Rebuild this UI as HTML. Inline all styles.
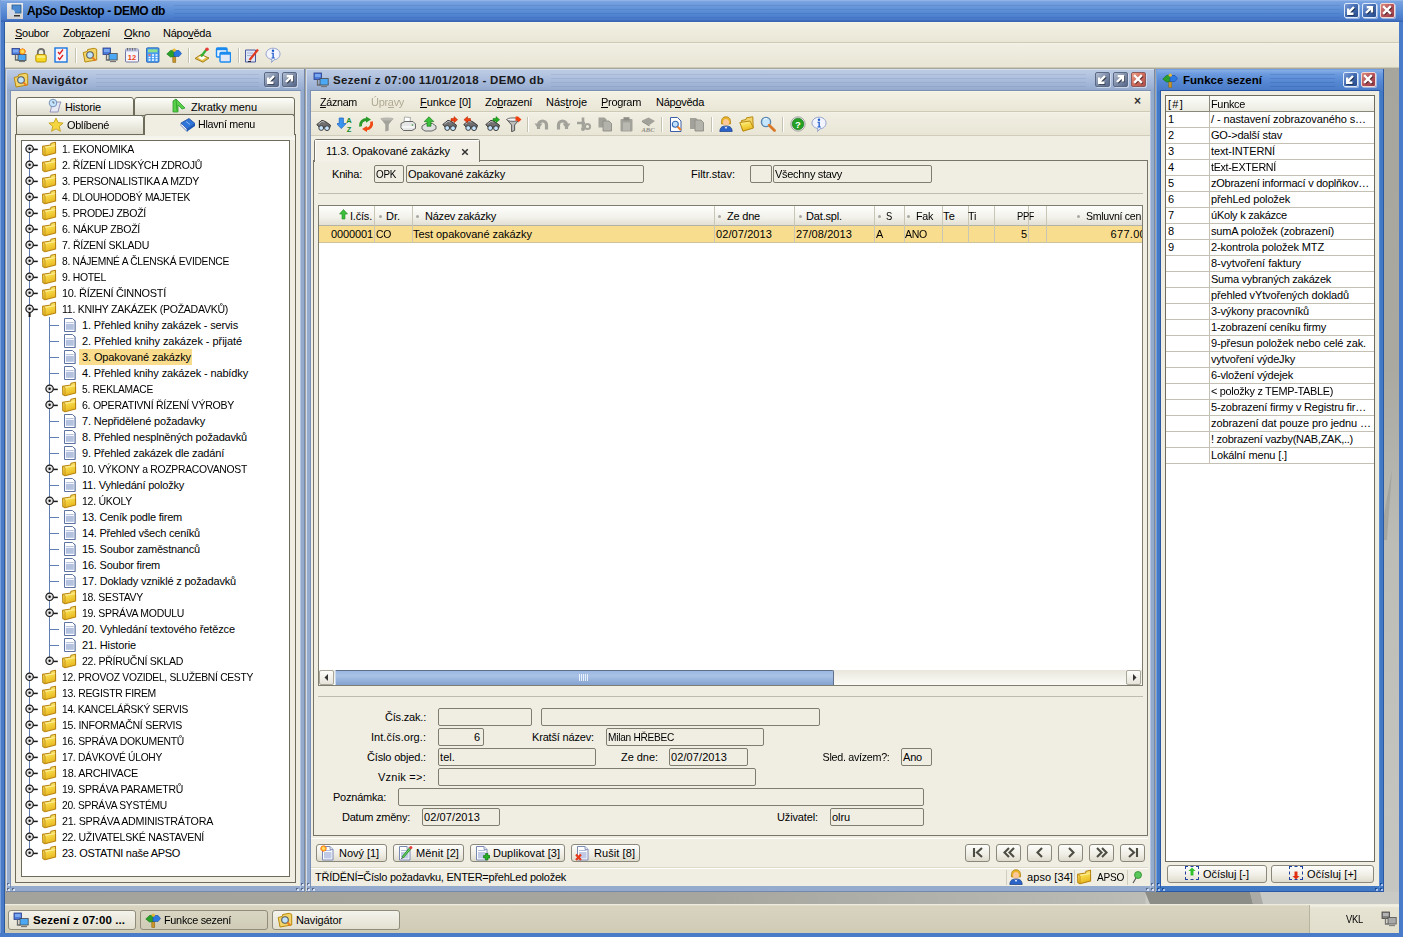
<!DOCTYPE html><html><head><meta charset="utf-8"><style>
html,body{margin:0;padding:0;}
body{width:1403px;height:937px;position:relative;overflow:hidden;background:#4a7bc8;font-family:"Liberation Sans",sans-serif;font-size:11px;color:#000;}
div{position:absolute;box-sizing:border-box;}
.t{white-space:nowrap;}
u{text-decoration:none;border-bottom:1px solid #000;line-height:9px;display:inline-block;}
</style></head><body>
<svg width="0" height="0" style="position:absolute"><defs><linearGradient id="gfold" x1="0" y1="0" x2="0.3" y2="1"><stop offset="0" stop-color="#fff6b8"/><stop offset="0.5" stop-color="#f6d848"/><stop offset="1" stop-color="#e8b820"/></linearGradient></defs></svg>
<div style="left:0px;top:0px;width:1403px;height:22px;background:linear-gradient(#a9c5ee 0px,#7ba4e1 1px,#6a98db 6px,#5387d2 14px,#4776c6 20px,#3866b4 21px);"></div>
<div style="left:174px;top:5px;width:1166px;height:1px;background:rgba(40,80,150,0.16);"></div>
<div style="left:174px;top:9px;width:1166px;height:1px;background:rgba(40,80,150,0.16);"></div>
<div style="left:174px;top:13px;width:1166px;height:1px;background:rgba(40,80,150,0.16);"></div>
<div style="left:174px;top:17px;width:1166px;height:1px;background:rgba(40,80,150,0.16);"></div>
<div style="left:7px;top:3px;width:16px;height:16px;background:linear-gradient(#eee,#cfcfcf);"></div>
<svg style="position:absolute;left:8px;top:4px" width="14" height="14" viewBox="0 0 14 14"><rect x="4" y="1" width="9" height="8" fill="#4a8ad0" stroke="#2a5a90" stroke-width="0.8"/><ellipse cx="4" cy="9" rx="3" ry="3.5" fill="#cfd8e4"/><rect x="6" y="11" width="6" height="1.5" fill="#333"/></svg>
<div class="t" style="font-size:12px;line-height:16px;top:2.53px;letter-spacing:-0.394px;font-weight:bold;left:27px;">ApSo Desktop - DEMO db</div>
<div style="left:1344px;top:3px;width:15px;height:15px;background:linear-gradient(135deg,#7a9cd8,#3f68ae 50%,#284c8c);border:1px solid #dde8f8;border-radius:2px;box-shadow:1px 1px 0 rgba(255,255,255,0.45);"></div>
<svg style="position:absolute;left:1346px;top:5px" width="11" height="11" viewBox="0 0 11 11"><g transform="translate(0.8,0.8)" opacity="0.55"><path d="M8 2L3 7M2.2 3.5v5.3h5.3" stroke="#000" stroke-width="2.4" fill="none"/></g><path d="M8 2L3 7M2.2 3.5v5.3h5.3" stroke="#fff" stroke-width="2.4" fill="none"/></svg>
<div style="left:1362px;top:3px;width:15px;height:15px;background:linear-gradient(135deg,#7a9cd8,#3f68ae 50%,#284c8c);border:1px solid #dde8f8;border-radius:2px;box-shadow:1px 1px 0 rgba(255,255,255,0.45);"></div>
<svg style="position:absolute;left:1364px;top:5px" width="11" height="11" viewBox="0 0 11 11"><g transform="translate(0.8,0.8)" opacity="0.55"><path d="M2 8L7 3M2.7 2.2h5.3v5.3" stroke="#000" stroke-width="2.4" fill="none"/></g><path d="M2 8L7 3M2.7 2.2h5.3v5.3" stroke="#fff" stroke-width="2.4" fill="none"/></svg>
<div style="left:1380px;top:3px;width:15px;height:15px;background:linear-gradient(135deg,#d8887a,#b8525a 50%,#963a48);border:1px solid #f4d8d0;border-radius:2px;box-shadow:1px 1px 0 rgba(255,255,255,0.45);"></div>
<svg style="position:absolute;left:1382px;top:5px" width="11" height="11" viewBox="0 0 11 11"><g transform="translate(0.8,0.8)" opacity="0.55"><path d="M2 2L8 8M8 2L2 8" stroke="#000" stroke-width="2.4" stroke-linecap="square"/></g><path d="M2 2L8 8M8 2L2 8" stroke="#fff" stroke-width="2.4" stroke-linecap="square"/></svg>
<div style="left:5px;top:22px;width:1394px;height:21px;background:linear-gradient(#fdfaea 0px,#f3f1e4 1px,#e9e6d6 20px);"></div>
<div style="left:5px;top:42px;width:1394px;height:1px;background:#cdcab6;"></div>
<div class="t" style="font-size:11px;line-height:16px;top:25.36px;letter-spacing:-0.245px;left:15px;"><u>S</u>oubor</div>
<div class="t" style="font-size:11px;line-height:16px;top:25.36px;letter-spacing:-0.280px;left:63px;">Zob<u>r</u>azení</div>
<div class="t" style="font-size:11px;line-height:16px;top:25.36px;letter-spacing:-0.072px;left:124px;"><u>O</u>kno</div>
<div class="t" style="font-size:11px;line-height:16px;top:25.36px;letter-spacing:-0.268px;left:163px;">Nápo<u>v</u>ěda</div>
<div style="left:5px;top:43px;width:1394px;height:25px;background:linear-gradient(#f8f6ea 0px,#f1efe3 1px,#e8e5d5 24px);"></div>
<div style="left:5px;top:67px;width:1394px;height:1px;background:#cdcab6;"></div>
<svg style="position:absolute;left:11px;top:47px" width="16" height="16" viewBox="0 0 16 16"><rect x="1" y="1.5" width="7.5" height="6" fill="#4a78d8" stroke="#2a3c8a" stroke-width="0.8"/><rect x="2" y="2.5" width="5.5" height="3" fill="#7aa8f0"/><path d="M4.5 7.5v5.5h3" stroke="#6a6a6a" fill="none" stroke-width="1.3"/><rect x="7" y="7.5" width="8" height="6" fill="#4aa8f4" stroke="#4a4a4a" stroke-width="0.8"/><path d="M8 14.5h6" stroke="#777" stroke-width="1.2"/><circle cx="11.5" cy="4.5" r="2.8" fill="#ffc020" stroke="#f05010" stroke-width="1" stroke-dasharray="1.2 0.8"/><circle cx="11.5" cy="4.5" r="1.5" fill="#ffe060"/></svg>
<svg style="position:absolute;left:33px;top:47px" width="16" height="16" viewBox="0 0 16 16"><path d="M4.8 8V5.2a3.2 3.2 0 0 1 6.4 0V8" stroke="#6e6e6e" stroke-width="1.8" fill="none"/><rect x="2.8" y="7.5" width="10.4" height="7.5" rx="1.5" fill="#f6d820" stroke="#b08a00" stroke-width="0.9"/><rect x="3.8" y="8.5" width="8.4" height="2.5" fill="#fff6a0" opacity="0.7"/></svg>
<svg style="position:absolute;left:53px;top:47px" width="16" height="16" viewBox="0 0 16 16"><rect x="2" y="1" width="12" height="14" fill="#f4f4f8" stroke="#1a74e0" stroke-width="1.4"/><path d="M5 5l1.6 2 3.4-4.5M5 10.5l1.6 2 3.4-4.5" stroke="#e02020" stroke-width="1.3" fill="none"/></svg>
<svg style="position:absolute;left:82px;top:47px" width="16" height="16" viewBox="0 0 16 16"><path d="M1.2 5.5l4-1 0.5-2 6.5-1.2 2.5 1V13L3 15z" fill="#f2d468" stroke="#b88a10" stroke-width="1"/><circle cx="8" cy="8" r="3.3" fill="#bfe3ff" stroke="#555" stroke-width="1.1"/><path d="M10.3 10.3l3.2 3.2" stroke="#f07a20" stroke-width="1.8"/></svg>
<svg style="position:absolute;left:102px;top:47px" width="16" height="16" viewBox="0 0 16 16"><rect x="1" y="1" width="7.5" height="6.5" fill="#4a78d8" stroke="#2a3c8a" stroke-width="0.8"/><rect x="2" y="2" width="5.5" height="3" fill="#7aa8f0"/><path d="M4.5 7.5v5.5h3" stroke="#6a6a6a" fill="none" stroke-width="1.3"/><rect x="7" y="6.5" width="8.2" height="6.5" fill="#4aa8f4" stroke="#4a4a4a" stroke-width="0.8"/><path d="M8 14.5h6" stroke="#777" stroke-width="1.3"/></svg>
<svg style="position:absolute;left:124px;top:47px" width="16" height="16" viewBox="0 0 16 16"><rect x="1.5" y="2" width="13" height="13" rx="1" fill="#f4f4fc" stroke="#7078a8" stroke-width="1"/><rect x="1.5" y="2" width="13" height="2.5" fill="#b8bede"/><path d="M3.5 1v2.5M6 1v2.5M8.5 1v2.5M11 1v2.5" stroke="#555" stroke-width="0.8"/><text x="8" y="12.8" font-size="7.5" font-family="Liberation Sans" font-weight="bold" text-anchor="middle" fill="#f04010">12</text></svg>
<svg style="position:absolute;left:145px;top:47px" width="16" height="16" viewBox="0 0 16 16"><rect x="1.5" y="0.8" width="12.5" height="14.5" rx="1" fill="#4a9cf0" stroke="#1a5ab0" stroke-width="0.8"/><rect x="3" y="2.3" width="9.5" height="3" fill="#8ee08a"/><path d="M3.5 8h2M7 8h2M10.5 8h2M3.5 10.5h2M7 10.5h2M10.5 10.5h2M3.5 13h2M7 13h2M10.5 13h2" stroke="#fff" stroke-width="1.3"/><path d="M3.5 8h2" stroke="#e03030" stroke-width="1.3"/></svg>
<svg style="position:absolute;left:166px;top:47px" width="16" height="16" viewBox="0 0 16 16"><rect x="6.8" y="6" width="3" height="9.5" fill="#c8962a" stroke="#8a6010" stroke-width="0.5"/><path d="M0.8 7L4.5 3.5 8.5 3v6.5L4.5 10z" fill="#2aa02a" stroke="#107010" stroke-width="0.6"/><path d="M8 3.5h5l2.5 3-2.5 3H8z" fill="#2a78e0" stroke="#1a4ca0" stroke-width="0.6"/><circle cx="8.3" cy="3.2" r="1.6" fill="#e8b830"/></svg>
<svg style="position:absolute;left:194px;top:47px" width="16" height="16" viewBox="0 0 16 16"><path d="M1 11.5L7 7.5l8 3.5-6 4.2z" fill="#e8c050" stroke="#a07a10" stroke-width="0.9"/><path d="M4 10.5l4-2 4 2-4 2.5z" fill="#fff"/><path d="M7 9.5L12.5 2.5" stroke="#30b030" stroke-width="2.2"/><circle cx="13" cy="2.2" r="1.8" fill="#e83a3a"/></svg>
<svg style="position:absolute;left:215px;top:47px" width="16" height="16" viewBox="0 0 16 16"><rect x="1.5" y="1" width="10.5" height="9" rx="1" fill="#e8f2ff" stroke="#1a8af0" stroke-width="1.4"/><rect x="1.5" y="1" width="10.5" height="2.2" fill="#1a8af0"/><rect x="5" y="5.5" width="10.5" height="9.5" rx="1" fill="#e0e8f8" stroke="#1a8af0" stroke-width="1.4"/><rect x="5" y="5.5" width="10.5" height="2.2" fill="#1a8af0"/></svg>
<svg style="position:absolute;left:244px;top:47px" width="16" height="16" viewBox="0 0 16 16"><path d="M1.5 3h10v12h-10z" fill="#dfe6f4" stroke="#4a5aa0" stroke-width="1"/><path d="M3 6h6M3 8.5h6" stroke="#9aa8d0" stroke-width="0.8"/><path d="M5.5 13L14 2.5" stroke="#e03a20" stroke-width="2.2"/><path d="M4 14.5h3" stroke="#223" stroke-width="1"/></svg>
<svg style="position:absolute;left:265px;top:47px" width="16" height="16" viewBox="0 0 16 16"><path d="M8 1.2c4 0 7 2.5 7 5.8s-3 5.8-6 5.8l-2.5 2.7 0.5-2.9C4 12 1 10 1 7s3-5.8 7-5.8z" fill="#f2f5ff" stroke="#8a9ac8" stroke-width="0.9"/><circle cx="8" cy="3.8" r="1.2" fill="#1a58c8"/><path d="M6.5 5.8h2.3v4.6h1v1H6.5v-1h1V6.8h-1z" fill="#1a58c8"/></svg>
<div style="left:75px;top:48px;width:1px;height:15px;background:#c5c2b2;"></div>
<div style="left:76px;top:48px;width:1px;height:15px;background:#fff;"></div>
<div style="left:188px;top:48px;width:1px;height:15px;background:#c5c2b2;"></div>
<div style="left:189px;top:48px;width:1px;height:15px;background:#fff;"></div>
<div style="left:238px;top:48px;width:1px;height:15px;background:#c5c2b2;"></div>
<div style="left:239px;top:48px;width:1px;height:15px;background:#fff;"></div>
<div style="left:5px;top:68px;width:1394px;height:836px;background:#a6a59e;"></div>
<div style="left:0px;top:0px;width:1px;height:937px;background:#7aa0dc;"></div>
<div style="left:1384px;top:68px;width:15px;height:836px;background:linear-gradient(#a6a59e 0px,#a9a9a2 300px,#bdbdb8 480px,#c6c6c2 836px);"></div>
<svg style="position:absolute;left:1384px;top:470px" width="15" height="70" viewBox="0 0 15 70"><path d="M8 0L3 70H0V45z" fill="#9a9a94" opacity="0.6"/></svg>
<div style="left:5px;top:892px;width:1394px;height:12px;background:linear-gradient(90deg,#a3a39c 0px,#a6a69f 700px,#bcbcb7 1140px,#c9c9c5 1141px);"></div>
<svg style="position:absolute;left:1100px;top:892px" width="200" height="12" viewBox="0 0 200 12"><path d="M45 0H150L153 12H50z" fill="#8d8d87"/><path d="M150 0H160L163 12H153z" fill="#abaaa4"/></svg>
<div style="left:4px;top:22px;width:1px;height:915px;background:#2a5aa0;"></div>
<div style="left:5px;top:904px;width:1394px;height:29px;background:linear-gradient(#f4f2e8 0px,#d8d4c0 2px,#cfcbb5 28px);"></div>
<div style="left:1309px;top:905px;width:90px;height:28px;background:linear-gradient(#f4f2e8 0px,#e6e3d3 3px,#e1decc 28px);border-left:1px solid #b8b49e;"></div>
<div class="t" style="font-size:11px;line-height:16px;top:911.36px;transform:scaleX(0.8546);transform-origin:left center;letter-spacing:-0.300px;left:1346px;">VKL</div>
<div style="left:1381px;top:911px;width:16px;height:16px;filter:grayscale(1) brightness(1.1);">
<svg style="position:absolute;left:0px;top:0px" width="16" height="16" viewBox="0 0 16 16"><rect x="1" y="1" width="7.5" height="6.5" fill="#4a78d8" stroke="#2a3c8a" stroke-width="0.8"/><rect x="2" y="2" width="5.5" height="3" fill="#7aa8f0"/><path d="M4.5 7.5v5.5h3" stroke="#6a6a6a" fill="none" stroke-width="1.3"/><rect x="7" y="6.5" width="8.2" height="6.5" fill="#4aa8f4" stroke="#4a4a4a" stroke-width="0.8"/><path d="M8 14.5h6" stroke="#777" stroke-width="1.3"/></svg>
</div>
<div style="left:8px;top:910px;width:128px;height:20px;background:linear-gradient(#f4f3ec,#e3e0d0);border:1px solid #8f8c7c;border-radius:3px;"></div>
<svg style="position:absolute;left:13px;top:912px" width="16" height="16" viewBox="0 0 16 16"><rect x="1" y="1" width="7.5" height="6.5" fill="#4a78d8" stroke="#2a3c8a" stroke-width="0.8"/><rect x="2" y="2" width="5.5" height="3" fill="#7aa8f0"/><path d="M4.5 7.5v5.5h3" stroke="#6a6a6a" fill="none" stroke-width="1.3"/><rect x="7" y="6.5" width="8.2" height="6.5" fill="#4aa8f4" stroke="#4a4a4a" stroke-width="0.8"/><path d="M8 14.5h6" stroke="#777" stroke-width="1.3"/></svg>
<div class="t" style="font-size:11.5px;line-height:16px;top:912.20px;letter-spacing:0.069px;font-weight:bold;left:33px;">Sezení z 07:00 ...</div>
<div style="left:140px;top:910px;width:128px;height:20px;background:linear-gradient(#d9d6c3,#cfcbb6);border:1px solid #8f8c7c;border-radius:3px;"></div>
<svg style="position:absolute;left:145px;top:912px" width="16" height="16" viewBox="0 0 16 16"><rect x="6.8" y="6" width="3" height="9.5" fill="#c8962a" stroke="#8a6010" stroke-width="0.5"/><path d="M0.8 7L4.5 3.5 8.5 3v6.5L4.5 10z" fill="#2aa02a" stroke="#107010" stroke-width="0.6"/><path d="M8 3.5h5l2.5 3-2.5 3H8z" fill="#2a78e0" stroke="#1a4ca0" stroke-width="0.6"/><circle cx="8.3" cy="3.2" r="1.6" fill="#e8b830"/></svg>
<div class="t" style="font-size:11px;line-height:16px;top:912.36px;transform:scaleX(0.9906);transform-origin:left center;letter-spacing:-0.300px;left:164px;">Funkce sezení</div>
<div style="left:272px;top:910px;width:128px;height:20px;background:linear-gradient(#f4f3ec,#e3e0d0);border:1px solid #8f8c7c;border-radius:3px;"></div>
<svg style="position:absolute;left:277px;top:912px" width="16" height="16" viewBox="0 0 16 16"><path d="M1.2 5.5l4-1 0.5-2 6.5-1.2 2.5 1V13L3 15z" fill="#f2d468" stroke="#b88a10" stroke-width="1"/><circle cx="8" cy="8" r="3.3" fill="#bfe3ff" stroke="#555" stroke-width="1.1"/><path d="M10.3 10.3l3.2 3.2" stroke="#f07a20" stroke-width="1.8"/></svg>
<div class="t" style="font-size:11px;line-height:16px;top:912.36px;letter-spacing:-0.119px;left:296px;">Navigátor</div>
<div style="left:0px;top:933px;width:1403px;height:4px;background:#4a7bc8;"></div>
<div style="left:6px;top:69px;width:299px;height:823px;background:#95abce;"></div>
<div style="left:6px;top:70px;width:299px;height:21px;background:linear-gradient(#bccbe4 0px,#b6c6e1 4px,#a6b9da 12px,#95abce 20px);"></div>
<div style="left:6px;top:69px;width:299px;height:1px;background:#d2ddf0;"></div>
<div style="left:6px;top:69px;width:1px;height:823px;background:#d2ddf0;"></div>
<div style="left:304px;top:69px;width:1px;height:823px;background:#7388aa;"></div>
<div style="left:6px;top:891px;width:299px;height:1px;background:#7388aa;"></div>
<div style="left:10px;top:90px;width:291px;height:1px;background:#7a90b5;"></div>
<div style="left:10px;top:90px;width:1px;height:798px;background:#7a90b5;"></div>
<div style="left:300px;top:91px;width:1px;height:797px;background:#d2ddf0;opacity:0.5;"></div>
<div style="left:301px;top:888px;width:2px;height:2px;background:#5a6a8a;"></div>
<div style="left:302px;top:889px;width:2px;height:2px;background:#d8e2f2;"></div>
<div style="left:296px;top:888px;width:2px;height:2px;background:#5a6a8a;"></div>
<div style="left:297px;top:889px;width:2px;height:2px;background:#d8e2f2;"></div>
<div style="left:301px;top:883px;width:2px;height:2px;background:#5a6a8a;"></div>
<div style="left:302px;top:884px;width:2px;height:2px;background:#d8e2f2;"></div>
<div style="left:7px;top:888px;width:2px;height:2px;background:#5a6a8a;"></div>
<div style="left:8px;top:889px;width:2px;height:2px;background:#d8e2f2;"></div>
<div style="left:12px;top:888px;width:2px;height:2px;background:#5a6a8a;"></div>
<div style="left:13px;top:889px;width:2px;height:2px;background:#d8e2f2;"></div>
<div style="left:7px;top:883px;width:2px;height:2px;background:#5a6a8a;"></div>
<div style="left:8px;top:884px;width:2px;height:2px;background:#d8e2f2;"></div>
<div style="left:96px;top:74px;width:163px;height:1px;background:rgba(80,100,150,0.13);"></div>
<div style="left:96px;top:78px;width:163px;height:1px;background:rgba(80,100,150,0.13);"></div>
<div style="left:96px;top:82px;width:163px;height:1px;background:rgba(80,100,150,0.13);"></div>
<div style="left:96px;top:86px;width:163px;height:1px;background:rgba(80,100,150,0.13);"></div>
<svg style="position:absolute;left:13px;top:72px" width="16" height="16" viewBox="0 0 16 16"><path d="M1.2 5.5l4-1 0.5-2 6.5-1.2 2.5 1V13L3 15z" fill="#f2d468" stroke="#b88a10" stroke-width="1"/><circle cx="8" cy="8" r="3.3" fill="#bfe3ff" stroke="#555" stroke-width="1.1"/><path d="M10.3 10.3l3.2 3.2" stroke="#f07a20" stroke-width="1.8"/></svg>
<div class="t" style="font-size:11.5px;line-height:16px;top:72.20px;letter-spacing:0.329px;font-weight:bold;left:32px;color:#1a1a1a;">Navigátor</div>
<div style="left:264px;top:72px;width:15px;height:15px;background:linear-gradient(135deg,#b4c0d4,#7e8da8 50%,#56678a);border:1px solid #5a6884;border-radius:2px;box-shadow:1px 1px 0 rgba(255,255,255,0.45);"></div>
<svg style="position:absolute;left:266px;top:74px" width="11" height="11" viewBox="0 0 11 11"><g transform="translate(0.8,0.8)" opacity="0.55"><path d="M8 2L3 7M2.2 3.5v5.3h5.3" stroke="#000" stroke-width="2.4" fill="none"/></g><path d="M8 2L3 7M2.2 3.5v5.3h5.3" stroke="#fff" stroke-width="2.4" fill="none"/></svg>
<div style="left:282px;top:72px;width:15px;height:15px;background:linear-gradient(135deg,#b4c0d4,#7e8da8 50%,#56678a);border:1px solid #5a6884;border-radius:2px;box-shadow:1px 1px 0 rgba(255,255,255,0.45);"></div>
<svg style="position:absolute;left:284px;top:74px" width="11" height="11" viewBox="0 0 11 11"><g transform="translate(0.8,0.8)" opacity="0.55"><path d="M2 8L7 3M2.7 2.2h5.3v5.3" stroke="#000" stroke-width="2.4" fill="none"/></g><path d="M2 8L7 3M2.7 2.2h5.3v5.3" stroke="#fff" stroke-width="2.4" fill="none"/></svg>
<div style="left:11px;top:91px;width:289px;height:795px;background:#f0eee3;"></div>
<div style="left:16px;top:97px;width:118px;height:19px;background:linear-gradient(#fdfdfa,#eeede3 50%,#dddbcd);border:1px solid #6d6b5a;border-radius:3px 3px 0 0;"></div>
<div style="left:134px;top:97px;width:161px;height:19px;background:linear-gradient(#fdfdfa,#eeede3 50%,#dddbcd);border:1px solid #6d6b5a;border-radius:3px 3px 0 0;"></div>
<div style="left:16px;top:115px;width:128px;height:20px;background:linear-gradient(#fdfdfa,#eeede3 50%,#dddbcd);border:1px solid #6d6b5a;border-radius:3px 3px 0 0;"></div>
<div style="left:15px;top:134px;width:281px;height:749px;background:#f0eee3;border:1px solid #6d6b5a;"></div>
<div style="left:144px;top:114px;width:151px;height:21px;background:#f0eee3;border:1px solid #6d6b5a;border-radius:3px 3px 0 0;border-bottom:none;"></div>
<div style="left:145px;top:133px;width:149px;height:3px;background:#f0eee3;"></div>
<svg style="position:absolute;left:47px;top:98px" width="16" height="16" viewBox="0 0 16 16"><path d="M5 4h9l-1 2-2 8H3l1-3z" fill="#e6e8f4" stroke="#8a8ab4" stroke-width="0.9"/><circle cx="6" cy="5" r="3.8" fill="#c4e4fc" stroke="#6a88b0" stroke-width="0.9"/><path d="M6 3v2h1.5" stroke="#445" stroke-width="0.7" fill="none"/></svg>
<div class="t" style="font-size:11px;line-height:16px;top:99.06px;letter-spacing:-0.161px;left:65px;">Historie</div>
<svg style="position:absolute;left:171px;top:98px" width="16" height="16" viewBox="0 0 16 16"><path d="M2 14V3l3-2 9 9-3 1-4-4v7z" fill="#5ad04a" stroke="#2a9a2a" stroke-width="0.8"/><path d="M5 1l1 12" stroke="#2a9a2a" stroke-width="0.8"/></svg>
<div class="t" style="font-size:11px;line-height:16px;top:99.06px;letter-spacing:-0.052px;left:191px;">Zkratky menu</div>
<svg style="position:absolute;left:48px;top:117px" width="16" height="16" viewBox="0 0 16 16"><path d="M8 1l2.1 4.6 5 .5-3.8 3.3 1.1 4.9L8 11.8 3.6 14.3l1.1-4.9L.9 6.1l5-.5z" fill="#f6d640" stroke="#c09a10" stroke-width="0.8"/></svg>
<div class="t" style="font-size:11px;line-height:16px;top:117.36px;transform:scaleX(0.9943);transform-origin:left center;letter-spacing:-0.300px;left:67px;">Oblíbené</div>
<svg style="position:absolute;left:180px;top:116px" width="16" height="16" viewBox="0 0 16 16"><path d="M1 7L9 2.5 15 7.5 7 13z" fill="#2f74d8" stroke="#1a4a9a" stroke-width="0.8"/><path d="M1 7v2.5L7 15.5V13z" fill="#eef" stroke="#1a4a9a" stroke-width="0.6"/><path d="M7 13v2.5l8-5.5V7.5z" fill="#1a58b8"/><path d="M6 5.5l4 3" stroke="#8ab8f0" stroke-width="1"/></svg>
<div class="t" style="font-size:11px;line-height:16px;top:116.06px;transform:scaleX(0.9752);transform-origin:left center;letter-spacing:-0.300px;left:198px;">Hlavní menu</div>
<div style="left:16px;top:136px;width:279px;height:4px;background:linear-gradient(#f3f2ea,#f8f7f1);"></div>
<div style="left:21px;top:140px;width:269px;height:737px;background:#fff;border:1px solid #6d6b5a;"></div>
<div style="left:29px;top:153px;width:1px;height:700px;background:#5f7fb5;"></div>
<div style="left:49px;top:317px;width:1px;height:344px;background:#5f7fb5;"></div>
<svg style="position:absolute;left:24px;top:143px" width="16" height="14" viewBox="0 0 16 14"><circle cx="5.6" cy="5.8" r="3.7" fill="#e4e4e4" stroke="#1a1a1a" stroke-width="1.2"/><circle cx="5.6" cy="5.8" r="1.2" fill="#111"/><path d="M9.2 6.4h4.6" stroke="#1a1a1a" stroke-width="1.5"/></svg>
<svg style="position:absolute;left:41px;top:141px" width="16" height="16" viewBox="0 0 16 16"><path d="M1.6 5.2L9.6 4 10 2.2 14.5 1.2 14.6 12 4 14.8 1.8 13.6z" fill="url(#gfold)" stroke="#b88410" stroke-width="1.1" stroke-linejoin="round"/><path d="M1.8 5.4L4 6.4V14.6" stroke="#c89420" stroke-width="1" fill="none"/><path d="M4.2 6.4L14.2 4.6" stroke="#fff4b0" stroke-width="0.8"/></svg>
<div class="t" style="font-size:11px;line-height:16px;top:141.36px;transform:scaleX(0.9568);transform-origin:left center;letter-spacing:-0.300px;left:62px;">1. EKONOMIKA</div>
<svg style="position:absolute;left:24px;top:159px" width="16" height="14" viewBox="0 0 16 14"><circle cx="5.6" cy="5.8" r="3.7" fill="#e4e4e4" stroke="#1a1a1a" stroke-width="1.2"/><circle cx="5.6" cy="5.8" r="1.2" fill="#111"/><path d="M9.2 6.4h4.6" stroke="#1a1a1a" stroke-width="1.5"/></svg>
<svg style="position:absolute;left:41px;top:157px" width="16" height="16" viewBox="0 0 16 16"><path d="M1.6 5.2L9.6 4 10 2.2 14.5 1.2 14.6 12 4 14.8 1.8 13.6z" fill="url(#gfold)" stroke="#b88410" stroke-width="1.1" stroke-linejoin="round"/><path d="M1.8 5.4L4 6.4V14.6" stroke="#c89420" stroke-width="1" fill="none"/><path d="M4.2 6.4L14.2 4.6" stroke="#fff4b0" stroke-width="0.8"/></svg>
<div class="t" style="font-size:11px;line-height:16px;top:157.36px;transform:scaleX(0.9555);transform-origin:left center;letter-spacing:-0.300px;left:62px;">2. ŘÍZENÍ LIDSKÝCH ZDROJŮ</div>
<svg style="position:absolute;left:24px;top:175px" width="16" height="14" viewBox="0 0 16 14"><circle cx="5.6" cy="5.8" r="3.7" fill="#e4e4e4" stroke="#1a1a1a" stroke-width="1.2"/><circle cx="5.6" cy="5.8" r="1.2" fill="#111"/><path d="M9.2 6.4h4.6" stroke="#1a1a1a" stroke-width="1.5"/></svg>
<svg style="position:absolute;left:41px;top:173px" width="16" height="16" viewBox="0 0 16 16"><path d="M1.6 5.2L9.6 4 10 2.2 14.5 1.2 14.6 12 4 14.8 1.8 13.6z" fill="url(#gfold)" stroke="#b88410" stroke-width="1.1" stroke-linejoin="round"/><path d="M1.8 5.4L4 6.4V14.6" stroke="#c89420" stroke-width="1" fill="none"/><path d="M4.2 6.4L14.2 4.6" stroke="#fff4b0" stroke-width="0.8"/></svg>
<div class="t" style="font-size:11px;line-height:16px;top:173.36px;transform:scaleX(0.9609);transform-origin:left center;letter-spacing:-0.300px;left:62px;">3. PERSONALISTIKA A MZDY</div>
<svg style="position:absolute;left:24px;top:191px" width="16" height="14" viewBox="0 0 16 14"><circle cx="5.6" cy="5.8" r="3.7" fill="#e4e4e4" stroke="#1a1a1a" stroke-width="1.2"/><circle cx="5.6" cy="5.8" r="1.2" fill="#111"/><path d="M9.2 6.4h4.6" stroke="#1a1a1a" stroke-width="1.5"/></svg>
<svg style="position:absolute;left:41px;top:189px" width="16" height="16" viewBox="0 0 16 16"><path d="M1.6 5.2L9.6 4 10 2.2 14.5 1.2 14.6 12 4 14.8 1.8 13.6z" fill="url(#gfold)" stroke="#b88410" stroke-width="1.1" stroke-linejoin="round"/><path d="M1.8 5.4L4 6.4V14.6" stroke="#c89420" stroke-width="1" fill="none"/><path d="M4.2 6.4L14.2 4.6" stroke="#fff4b0" stroke-width="0.8"/></svg>
<div class="t" style="font-size:11px;line-height:16px;top:189.36px;transform:scaleX(0.9279);transform-origin:left center;letter-spacing:-0.300px;left:62px;">4. DLOUHODOBÝ MAJETEK</div>
<svg style="position:absolute;left:24px;top:207px" width="16" height="14" viewBox="0 0 16 14"><circle cx="5.6" cy="5.8" r="3.7" fill="#e4e4e4" stroke="#1a1a1a" stroke-width="1.2"/><circle cx="5.6" cy="5.8" r="1.2" fill="#111"/><path d="M9.2 6.4h4.6" stroke="#1a1a1a" stroke-width="1.5"/></svg>
<svg style="position:absolute;left:41px;top:205px" width="16" height="16" viewBox="0 0 16 16"><path d="M1.6 5.2L9.6 4 10 2.2 14.5 1.2 14.6 12 4 14.8 1.8 13.6z" fill="url(#gfold)" stroke="#b88410" stroke-width="1.1" stroke-linejoin="round"/><path d="M1.8 5.4L4 6.4V14.6" stroke="#c89420" stroke-width="1" fill="none"/><path d="M4.2 6.4L14.2 4.6" stroke="#fff4b0" stroke-width="0.8"/></svg>
<div class="t" style="font-size:11px;line-height:16px;top:205.36px;transform:scaleX(0.9568);transform-origin:left center;letter-spacing:-0.300px;left:62px;">5. PRODEJ ZBOŽÍ</div>
<svg style="position:absolute;left:24px;top:223px" width="16" height="14" viewBox="0 0 16 14"><circle cx="5.6" cy="5.8" r="3.7" fill="#e4e4e4" stroke="#1a1a1a" stroke-width="1.2"/><circle cx="5.6" cy="5.8" r="1.2" fill="#111"/><path d="M9.2 6.4h4.6" stroke="#1a1a1a" stroke-width="1.5"/></svg>
<svg style="position:absolute;left:41px;top:221px" width="16" height="16" viewBox="0 0 16 16"><path d="M1.6 5.2L9.6 4 10 2.2 14.5 1.2 14.6 12 4 14.8 1.8 13.6z" fill="url(#gfold)" stroke="#b88410" stroke-width="1.1" stroke-linejoin="round"/><path d="M1.8 5.4L4 6.4V14.6" stroke="#c89420" stroke-width="1" fill="none"/><path d="M4.2 6.4L14.2 4.6" stroke="#fff4b0" stroke-width="0.8"/></svg>
<div class="t" style="font-size:11px;line-height:16px;top:221.36px;transform:scaleX(0.9609);transform-origin:left center;letter-spacing:-0.300px;left:62px;">6. NÁKUP ZBOŽÍ</div>
<svg style="position:absolute;left:24px;top:239px" width="16" height="14" viewBox="0 0 16 14"><circle cx="5.6" cy="5.8" r="3.7" fill="#e4e4e4" stroke="#1a1a1a" stroke-width="1.2"/><circle cx="5.6" cy="5.8" r="1.2" fill="#111"/><path d="M9.2 6.4h4.6" stroke="#1a1a1a" stroke-width="1.5"/></svg>
<svg style="position:absolute;left:41px;top:237px" width="16" height="16" viewBox="0 0 16 16"><path d="M1.6 5.2L9.6 4 10 2.2 14.5 1.2 14.6 12 4 14.8 1.8 13.6z" fill="url(#gfold)" stroke="#b88410" stroke-width="1.1" stroke-linejoin="round"/><path d="M1.8 5.4L4 6.4V14.6" stroke="#c89420" stroke-width="1" fill="none"/><path d="M4.2 6.4L14.2 4.6" stroke="#fff4b0" stroke-width="0.8"/></svg>
<div class="t" style="font-size:11px;line-height:16px;top:237.36px;transform:scaleX(0.9607);transform-origin:left center;letter-spacing:-0.300px;left:62px;">7. ŘÍZENÍ SKLADU</div>
<svg style="position:absolute;left:24px;top:255px" width="16" height="14" viewBox="0 0 16 14"><circle cx="5.6" cy="5.8" r="3.7" fill="#e4e4e4" stroke="#1a1a1a" stroke-width="1.2"/><circle cx="5.6" cy="5.8" r="1.2" fill="#111"/><path d="M9.2 6.4h4.6" stroke="#1a1a1a" stroke-width="1.5"/></svg>
<svg style="position:absolute;left:41px;top:253px" width="16" height="16" viewBox="0 0 16 16"><path d="M1.6 5.2L9.6 4 10 2.2 14.5 1.2 14.6 12 4 14.8 1.8 13.6z" fill="url(#gfold)" stroke="#b88410" stroke-width="1.1" stroke-linejoin="round"/><path d="M1.8 5.4L4 6.4V14.6" stroke="#c89420" stroke-width="1" fill="none"/><path d="M4.2 6.4L14.2 4.6" stroke="#fff4b0" stroke-width="0.8"/></svg>
<div class="t" style="font-size:11px;line-height:16px;top:253.36px;transform:scaleX(0.9331);transform-origin:left center;letter-spacing:-0.300px;left:62px;">8. NÁJEMNÉ A ČLENSKÁ EVIDENCE</div>
<svg style="position:absolute;left:24px;top:271px" width="16" height="14" viewBox="0 0 16 14"><circle cx="5.6" cy="5.8" r="3.7" fill="#e4e4e4" stroke="#1a1a1a" stroke-width="1.2"/><circle cx="5.6" cy="5.8" r="1.2" fill="#111"/><path d="M9.2 6.4h4.6" stroke="#1a1a1a" stroke-width="1.5"/></svg>
<svg style="position:absolute;left:41px;top:269px" width="16" height="16" viewBox="0 0 16 16"><path d="M1.6 5.2L9.6 4 10 2.2 14.5 1.2 14.6 12 4 14.8 1.8 13.6z" fill="url(#gfold)" stroke="#b88410" stroke-width="1.1" stroke-linejoin="round"/><path d="M1.8 5.4L4 6.4V14.6" stroke="#c89420" stroke-width="1" fill="none"/><path d="M4.2 6.4L14.2 4.6" stroke="#fff4b0" stroke-width="0.8"/></svg>
<div class="t" style="font-size:11px;line-height:16px;top:269.36px;transform:scaleX(0.9462);transform-origin:left center;letter-spacing:-0.300px;left:62px;">9. HOTEL</div>
<svg style="position:absolute;left:24px;top:287px" width="16" height="14" viewBox="0 0 16 14"><circle cx="5.6" cy="5.8" r="3.7" fill="#e4e4e4" stroke="#1a1a1a" stroke-width="1.2"/><circle cx="5.6" cy="5.8" r="1.2" fill="#111"/><path d="M9.2 6.4h4.6" stroke="#1a1a1a" stroke-width="1.5"/></svg>
<svg style="position:absolute;left:41px;top:285px" width="16" height="16" viewBox="0 0 16 16"><path d="M1.6 5.2L9.6 4 10 2.2 14.5 1.2 14.6 12 4 14.8 1.8 13.6z" fill="url(#gfold)" stroke="#b88410" stroke-width="1.1" stroke-linejoin="round"/><path d="M1.8 5.4L4 6.4V14.6" stroke="#c89420" stroke-width="1" fill="none"/><path d="M4.2 6.4L14.2 4.6" stroke="#fff4b0" stroke-width="0.8"/></svg>
<div class="t" style="font-size:11px;line-height:16px;top:285.36px;transform:scaleX(0.9970);transform-origin:left center;letter-spacing:-0.300px;left:62px;">10. ŘÍZENÍ ČINNOSTÍ</div>
<svg style="position:absolute;left:24px;top:303px" width="16" height="14" viewBox="0 0 16 14"><circle cx="5.6" cy="5.8" r="3.7" fill="#e4e4e4" stroke="#1a1a1a" stroke-width="1.2"/><circle cx="5.6" cy="5.8" r="1.2" fill="#111"/><path d="M9.2 6.4h4.6" stroke="#1a1a1a" stroke-width="1.5"/><path d="M5.6 9.6v4.4" stroke="#111" stroke-width="2"/></svg>
<svg style="position:absolute;left:41px;top:301px" width="16" height="16" viewBox="0 0 16 16"><path d="M1.6 5.2L9.6 4 10 2.2 14.5 1.2 14.6 12 4 14.8 1.8 13.6z" fill="url(#gfold)" stroke="#b88410" stroke-width="1.1" stroke-linejoin="round"/><path d="M1.8 5.4L4 6.4V14.6" stroke="#c89420" stroke-width="1" fill="none"/><path d="M4.2 6.4L14.2 4.6" stroke="#fff4b0" stroke-width="0.8"/></svg>
<div class="t" style="font-size:11px;line-height:16px;top:301.36px;transform:scaleX(0.9604);transform-origin:left center;letter-spacing:-0.300px;left:62px;">11. KNIHY ZAKÁZEK (POŽADAVKŮ)</div>
<div style="left:49px;top:325px;width:10px;height:1px;background:#5f7fb5;"></div>
<svg style="position:absolute;left:62px;top:317px" width="16" height="16" viewBox="0 0 16 16"><path d="M3.5 2.5h9l1.5 1.5v11h-10.5z" fill="#8a96b4" opacity="0.6"/><path d="M2.5 1.5h8l2.5 2.5v10.5h-10.5z" fill="#fff" stroke="#5f72a4" stroke-width="1"/><rect x="3.8" y="6.8" width="8" height="6" fill="#b4c2e0"/><rect x="3.8" y="5" width="8" height="0.8" fill="#a8b6d8"/></svg>
<div class="t" style="font-size:11px;line-height:16px;top:317.36px;letter-spacing:-0.145px;left:82px;">1. Přehled knihy zakázek - servis</div>
<div style="left:49px;top:341px;width:10px;height:1px;background:#5f7fb5;"></div>
<svg style="position:absolute;left:62px;top:333px" width="16" height="16" viewBox="0 0 16 16"><path d="M3.5 2.5h9l1.5 1.5v11h-10.5z" fill="#8a96b4" opacity="0.6"/><path d="M2.5 1.5h8l2.5 2.5v10.5h-10.5z" fill="#fff" stroke="#5f72a4" stroke-width="1"/><rect x="3.8" y="6.8" width="8" height="6" fill="#b4c2e0"/><rect x="3.8" y="5" width="8" height="0.8" fill="#a8b6d8"/></svg>
<div class="t" style="font-size:11px;line-height:16px;top:333.36px;letter-spacing:-0.059px;left:82px;">2. Přehled knihy zakázek - přijaté</div>
<div style="left:49px;top:357px;width:10px;height:1px;background:#5f7fb5;"></div>
<svg style="position:absolute;left:62px;top:349px" width="16" height="16" viewBox="0 0 16 16"><path d="M3.5 2.5h9l1.5 1.5v11h-10.5z" fill="#8a96b4" opacity="0.6"/><path d="M2.5 1.5h8l2.5 2.5v10.5h-10.5z" fill="#fff" stroke="#5f72a4" stroke-width="1"/><rect x="3.8" y="6.8" width="8" height="6" fill="#b4c2e0"/><rect x="3.8" y="5" width="8" height="0.8" fill="#a8b6d8"/></svg>
<div style="left:79px;top:349px;width:113px;height:16px;background:#f9dc8c;"></div>
<div class="t" style="font-size:11px;line-height:16px;top:349.36px;letter-spacing:-0.114px;left:82px;">3. Opakované zakázky</div>
<div style="left:49px;top:373px;width:10px;height:1px;background:#5f7fb5;"></div>
<svg style="position:absolute;left:62px;top:365px" width="16" height="16" viewBox="0 0 16 16"><path d="M3.5 2.5h9l1.5 1.5v11h-10.5z" fill="#8a96b4" opacity="0.6"/><path d="M2.5 1.5h8l2.5 2.5v10.5h-10.5z" fill="#fff" stroke="#5f72a4" stroke-width="1"/><rect x="3.8" y="6.8" width="8" height="6" fill="#b4c2e0"/><rect x="3.8" y="5" width="8" height="0.8" fill="#a8b6d8"/></svg>
<div class="t" style="font-size:11px;line-height:16px;top:365.36px;letter-spacing:-0.135px;left:82px;">4. Přehled knihy zakázek - nabídky</div>
<svg style="position:absolute;left:44px;top:383px" width="16" height="14" viewBox="0 0 16 14"><circle cx="5.6" cy="5.8" r="3.7" fill="#e4e4e4" stroke="#1a1a1a" stroke-width="1.2"/><circle cx="5.6" cy="5.8" r="1.2" fill="#111"/><path d="M9.2 6.4h4.6" stroke="#1a1a1a" stroke-width="1.5"/></svg>
<svg style="position:absolute;left:61px;top:381px" width="16" height="16" viewBox="0 0 16 16"><path d="M1.6 5.2L9.6 4 10 2.2 14.5 1.2 14.6 12 4 14.8 1.8 13.6z" fill="url(#gfold)" stroke="#b88410" stroke-width="1.1" stroke-linejoin="round"/><path d="M1.8 5.4L4 6.4V14.6" stroke="#c89420" stroke-width="1" fill="none"/><path d="M4.2 6.4L14.2 4.6" stroke="#fff4b0" stroke-width="0.8"/></svg>
<div class="t" style="font-size:11px;line-height:16px;top:381.36px;transform:scaleX(0.9283);transform-origin:left center;letter-spacing:-0.300px;left:82px;">5. REKLAMACE</div>
<svg style="position:absolute;left:44px;top:399px" width="16" height="14" viewBox="0 0 16 14"><circle cx="5.6" cy="5.8" r="3.7" fill="#e4e4e4" stroke="#1a1a1a" stroke-width="1.2"/><circle cx="5.6" cy="5.8" r="1.2" fill="#111"/><path d="M9.2 6.4h4.6" stroke="#1a1a1a" stroke-width="1.5"/></svg>
<svg style="position:absolute;left:61px;top:397px" width="16" height="16" viewBox="0 0 16 16"><path d="M1.6 5.2L9.6 4 10 2.2 14.5 1.2 14.6 12 4 14.8 1.8 13.6z" fill="url(#gfold)" stroke="#b88410" stroke-width="1.1" stroke-linejoin="round"/><path d="M1.8 5.4L4 6.4V14.6" stroke="#c89420" stroke-width="1" fill="none"/><path d="M4.2 6.4L14.2 4.6" stroke="#fff4b0" stroke-width="0.8"/></svg>
<div class="t" style="font-size:11px;line-height:16px;top:397.36px;transform:scaleX(0.9623);transform-origin:left center;letter-spacing:-0.300px;left:82px;">6. OPERATIVNÍ ŘÍZENÍ VÝROBY</div>
<div style="left:49px;top:421px;width:10px;height:1px;background:#5f7fb5;"></div>
<svg style="position:absolute;left:62px;top:413px" width="16" height="16" viewBox="0 0 16 16"><path d="M3.5 2.5h9l1.5 1.5v11h-10.5z" fill="#8a96b4" opacity="0.6"/><path d="M2.5 1.5h8l2.5 2.5v10.5h-10.5z" fill="#fff" stroke="#5f72a4" stroke-width="1"/><rect x="3.8" y="6.8" width="8" height="6" fill="#b4c2e0"/><rect x="3.8" y="5" width="8" height="0.8" fill="#a8b6d8"/></svg>
<div class="t" style="font-size:11px;line-height:16px;top:413.36px;letter-spacing:-0.174px;left:82px;">7. Nepřidělené požadavky</div>
<div style="left:49px;top:437px;width:10px;height:1px;background:#5f7fb5;"></div>
<svg style="position:absolute;left:62px;top:429px" width="16" height="16" viewBox="0 0 16 16"><path d="M3.5 2.5h9l1.5 1.5v11h-10.5z" fill="#8a96b4" opacity="0.6"/><path d="M2.5 1.5h8l2.5 2.5v10.5h-10.5z" fill="#fff" stroke="#5f72a4" stroke-width="1"/><rect x="3.8" y="6.8" width="8" height="6" fill="#b4c2e0"/><rect x="3.8" y="5" width="8" height="0.8" fill="#a8b6d8"/></svg>
<div class="t" style="font-size:11px;line-height:16px;top:429.36px;letter-spacing:-0.194px;left:82px;">8. Přehled nesplněných požadavků</div>
<div style="left:49px;top:453px;width:10px;height:1px;background:#5f7fb5;"></div>
<svg style="position:absolute;left:62px;top:445px" width="16" height="16" viewBox="0 0 16 16"><path d="M3.5 2.5h9l1.5 1.5v11h-10.5z" fill="#8a96b4" opacity="0.6"/><path d="M2.5 1.5h8l2.5 2.5v10.5h-10.5z" fill="#fff" stroke="#5f72a4" stroke-width="1"/><rect x="3.8" y="6.8" width="8" height="6" fill="#b4c2e0"/><rect x="3.8" y="5" width="8" height="0.8" fill="#a8b6d8"/></svg>
<div class="t" style="font-size:11px;line-height:16px;top:445.36px;letter-spacing:-0.185px;left:82px;">9. Přehled zakázek dle zadání</div>
<svg style="position:absolute;left:44px;top:463px" width="16" height="14" viewBox="0 0 16 14"><circle cx="5.6" cy="5.8" r="3.7" fill="#e4e4e4" stroke="#1a1a1a" stroke-width="1.2"/><circle cx="5.6" cy="5.8" r="1.2" fill="#111"/><path d="M9.2 6.4h4.6" stroke="#1a1a1a" stroke-width="1.5"/></svg>
<svg style="position:absolute;left:61px;top:461px" width="16" height="16" viewBox="0 0 16 16"><path d="M1.6 5.2L9.6 4 10 2.2 14.5 1.2 14.6 12 4 14.8 1.8 13.6z" fill="url(#gfold)" stroke="#b88410" stroke-width="1.1" stroke-linejoin="round"/><path d="M1.8 5.4L4 6.4V14.6" stroke="#c89420" stroke-width="1" fill="none"/><path d="M4.2 6.4L14.2 4.6" stroke="#fff4b0" stroke-width="0.8"/></svg>
<div class="t" style="font-size:11px;line-height:16px;top:461.36px;transform:scaleX(0.9435);transform-origin:left center;letter-spacing:-0.300px;left:82px;">10. VÝKONY a ROZPRACOVANOST</div>
<div style="left:49px;top:485px;width:10px;height:1px;background:#5f7fb5;"></div>
<svg style="position:absolute;left:62px;top:477px" width="16" height="16" viewBox="0 0 16 16"><path d="M3.5 2.5h9l1.5 1.5v11h-10.5z" fill="#8a96b4" opacity="0.6"/><path d="M2.5 1.5h8l2.5 2.5v10.5h-10.5z" fill="#fff" stroke="#5f72a4" stroke-width="1"/><rect x="3.8" y="6.8" width="8" height="6" fill="#b4c2e0"/><rect x="3.8" y="5" width="8" height="0.8" fill="#a8b6d8"/></svg>
<div class="t" style="font-size:11px;line-height:16px;top:477.36px;letter-spacing:-0.209px;left:82px;">11. Vyhledání položky</div>
<svg style="position:absolute;left:44px;top:495px" width="16" height="14" viewBox="0 0 16 14"><circle cx="5.6" cy="5.8" r="3.7" fill="#e4e4e4" stroke="#1a1a1a" stroke-width="1.2"/><circle cx="5.6" cy="5.8" r="1.2" fill="#111"/><path d="M9.2 6.4h4.6" stroke="#1a1a1a" stroke-width="1.5"/></svg>
<svg style="position:absolute;left:61px;top:493px" width="16" height="16" viewBox="0 0 16 16"><path d="M1.6 5.2L9.6 4 10 2.2 14.5 1.2 14.6 12 4 14.8 1.8 13.6z" fill="url(#gfold)" stroke="#b88410" stroke-width="1.1" stroke-linejoin="round"/><path d="M1.8 5.4L4 6.4V14.6" stroke="#c89420" stroke-width="1" fill="none"/><path d="M4.2 6.4L14.2 4.6" stroke="#fff4b0" stroke-width="0.8"/></svg>
<div class="t" style="font-size:11px;line-height:16px;top:493.36px;transform:scaleX(0.9593);transform-origin:left center;letter-spacing:-0.300px;left:82px;">12. ÚKOLY</div>
<div style="left:49px;top:517px;width:10px;height:1px;background:#5f7fb5;"></div>
<svg style="position:absolute;left:62px;top:509px" width="16" height="16" viewBox="0 0 16 16"><path d="M3.5 2.5h9l1.5 1.5v11h-10.5z" fill="#8a96b4" opacity="0.6"/><path d="M2.5 1.5h8l2.5 2.5v10.5h-10.5z" fill="#fff" stroke="#5f72a4" stroke-width="1"/><rect x="3.8" y="6.8" width="8" height="6" fill="#b4c2e0"/><rect x="3.8" y="5" width="8" height="0.8" fill="#a8b6d8"/></svg>
<div class="t" style="font-size:11px;line-height:16px;top:509.36px;letter-spacing:-0.216px;left:82px;">13. Ceník podle firem</div>
<div style="left:49px;top:533px;width:10px;height:1px;background:#5f7fb5;"></div>
<svg style="position:absolute;left:62px;top:525px" width="16" height="16" viewBox="0 0 16 16"><path d="M3.5 2.5h9l1.5 1.5v11h-10.5z" fill="#8a96b4" opacity="0.6"/><path d="M2.5 1.5h8l2.5 2.5v10.5h-10.5z" fill="#fff" stroke="#5f72a4" stroke-width="1"/><rect x="3.8" y="6.8" width="8" height="6" fill="#b4c2e0"/><rect x="3.8" y="5" width="8" height="0.8" fill="#a8b6d8"/></svg>
<div class="t" style="font-size:11px;line-height:16px;top:525.36px;letter-spacing:-0.230px;left:82px;">14. Přehled všech ceníků</div>
<div style="left:49px;top:549px;width:10px;height:1px;background:#5f7fb5;"></div>
<svg style="position:absolute;left:62px;top:541px" width="16" height="16" viewBox="0 0 16 16"><path d="M3.5 2.5h9l1.5 1.5v11h-10.5z" fill="#8a96b4" opacity="0.6"/><path d="M2.5 1.5h8l2.5 2.5v10.5h-10.5z" fill="#fff" stroke="#5f72a4" stroke-width="1"/><rect x="3.8" y="6.8" width="8" height="6" fill="#b4c2e0"/><rect x="3.8" y="5" width="8" height="0.8" fill="#a8b6d8"/></svg>
<div class="t" style="font-size:11px;line-height:16px;top:541.36px;letter-spacing:-0.195px;left:82px;">15. Soubor zaměstnanců</div>
<div style="left:49px;top:565px;width:10px;height:1px;background:#5f7fb5;"></div>
<svg style="position:absolute;left:62px;top:557px" width="16" height="16" viewBox="0 0 16 16"><path d="M3.5 2.5h9l1.5 1.5v11h-10.5z" fill="#8a96b4" opacity="0.6"/><path d="M2.5 1.5h8l2.5 2.5v10.5h-10.5z" fill="#fff" stroke="#5f72a4" stroke-width="1"/><rect x="3.8" y="6.8" width="8" height="6" fill="#b4c2e0"/><rect x="3.8" y="5" width="8" height="0.8" fill="#a8b6d8"/></svg>
<div class="t" style="font-size:11px;line-height:16px;top:557.36px;letter-spacing:-0.207px;left:82px;">16. Soubor firem</div>
<div style="left:49px;top:581px;width:10px;height:1px;background:#5f7fb5;"></div>
<svg style="position:absolute;left:62px;top:573px" width="16" height="16" viewBox="0 0 16 16"><path d="M3.5 2.5h9l1.5 1.5v11h-10.5z" fill="#8a96b4" opacity="0.6"/><path d="M2.5 1.5h8l2.5 2.5v10.5h-10.5z" fill="#fff" stroke="#5f72a4" stroke-width="1"/><rect x="3.8" y="6.8" width="8" height="6" fill="#b4c2e0"/><rect x="3.8" y="5" width="8" height="0.8" fill="#a8b6d8"/></svg>
<div class="t" style="font-size:11px;line-height:16px;top:573.36px;letter-spacing:-0.180px;left:82px;">17. Doklady vzniklé z požadavků</div>
<svg style="position:absolute;left:44px;top:591px" width="16" height="14" viewBox="0 0 16 14"><circle cx="5.6" cy="5.8" r="3.7" fill="#e4e4e4" stroke="#1a1a1a" stroke-width="1.2"/><circle cx="5.6" cy="5.8" r="1.2" fill="#111"/><path d="M9.2 6.4h4.6" stroke="#1a1a1a" stroke-width="1.5"/></svg>
<svg style="position:absolute;left:61px;top:589px" width="16" height="16" viewBox="0 0 16 16"><path d="M1.6 5.2L9.6 4 10 2.2 14.5 1.2 14.6 12 4 14.8 1.8 13.6z" fill="url(#gfold)" stroke="#b88410" stroke-width="1.1" stroke-linejoin="round"/><path d="M1.8 5.4L4 6.4V14.6" stroke="#c89420" stroke-width="1" fill="none"/><path d="M4.2 6.4L14.2 4.6" stroke="#fff4b0" stroke-width="0.8"/></svg>
<div class="t" style="font-size:11px;line-height:16px;top:589.36px;transform:scaleX(0.9508);transform-origin:left center;letter-spacing:-0.300px;left:82px;">18. SESTAVY</div>
<svg style="position:absolute;left:44px;top:607px" width="16" height="14" viewBox="0 0 16 14"><circle cx="5.6" cy="5.8" r="3.7" fill="#e4e4e4" stroke="#1a1a1a" stroke-width="1.2"/><circle cx="5.6" cy="5.8" r="1.2" fill="#111"/><path d="M9.2 6.4h4.6" stroke="#1a1a1a" stroke-width="1.5"/></svg>
<svg style="position:absolute;left:61px;top:605px" width="16" height="16" viewBox="0 0 16 16"><path d="M1.6 5.2L9.6 4 10 2.2 14.5 1.2 14.6 12 4 14.8 1.8 13.6z" fill="url(#gfold)" stroke="#b88410" stroke-width="1.1" stroke-linejoin="round"/><path d="M1.8 5.4L4 6.4V14.6" stroke="#c89420" stroke-width="1" fill="none"/><path d="M4.2 6.4L14.2 4.6" stroke="#fff4b0" stroke-width="0.8"/></svg>
<div class="t" style="font-size:11px;line-height:16px;top:605.36px;transform:scaleX(0.9517);transform-origin:left center;letter-spacing:-0.300px;left:82px;">19. SPRÁVA MODULU</div>
<div style="left:49px;top:629px;width:10px;height:1px;background:#5f7fb5;"></div>
<svg style="position:absolute;left:62px;top:621px" width="16" height="16" viewBox="0 0 16 16"><path d="M3.5 2.5h9l1.5 1.5v11h-10.5z" fill="#8a96b4" opacity="0.6"/><path d="M2.5 1.5h8l2.5 2.5v10.5h-10.5z" fill="#fff" stroke="#5f72a4" stroke-width="1"/><rect x="3.8" y="6.8" width="8" height="6" fill="#b4c2e0"/><rect x="3.8" y="5" width="8" height="0.8" fill="#a8b6d8"/></svg>
<div class="t" style="font-size:11px;line-height:16px;top:621.36px;letter-spacing:-0.121px;left:82px;">20. Vyhledání textového řetězce</div>
<div style="left:49px;top:645px;width:10px;height:1px;background:#5f7fb5;"></div>
<svg style="position:absolute;left:62px;top:637px" width="16" height="16" viewBox="0 0 16 16"><path d="M3.5 2.5h9l1.5 1.5v11h-10.5z" fill="#8a96b4" opacity="0.6"/><path d="M2.5 1.5h8l2.5 2.5v10.5h-10.5z" fill="#fff" stroke="#5f72a4" stroke-width="1"/><rect x="3.8" y="6.8" width="8" height="6" fill="#b4c2e0"/><rect x="3.8" y="5" width="8" height="0.8" fill="#a8b6d8"/></svg>
<div class="t" style="font-size:11px;line-height:16px;top:637.36px;letter-spacing:-0.136px;left:82px;">21. Historie</div>
<svg style="position:absolute;left:44px;top:655px" width="16" height="14" viewBox="0 0 16 14"><circle cx="5.6" cy="5.8" r="3.7" fill="#e4e4e4" stroke="#1a1a1a" stroke-width="1.2"/><circle cx="5.6" cy="5.8" r="1.2" fill="#111"/><path d="M9.2 6.4h4.6" stroke="#1a1a1a" stroke-width="1.5"/></svg>
<svg style="position:absolute;left:61px;top:653px" width="16" height="16" viewBox="0 0 16 16"><path d="M1.6 5.2L9.6 4 10 2.2 14.5 1.2 14.6 12 4 14.8 1.8 13.6z" fill="url(#gfold)" stroke="#b88410" stroke-width="1.1" stroke-linejoin="round"/><path d="M1.8 5.4L4 6.4V14.6" stroke="#c89420" stroke-width="1" fill="none"/><path d="M4.2 6.4L14.2 4.6" stroke="#fff4b0" stroke-width="0.8"/></svg>
<div class="t" style="font-size:11px;line-height:16px;top:653.36px;transform:scaleX(0.9597);transform-origin:left center;letter-spacing:-0.300px;left:82px;">22. PŘÍRUČNÍ SKLAD</div>
<svg style="position:absolute;left:24px;top:671px" width="16" height="14" viewBox="0 0 16 14"><circle cx="5.6" cy="5.8" r="3.7" fill="#e4e4e4" stroke="#1a1a1a" stroke-width="1.2"/><circle cx="5.6" cy="5.8" r="1.2" fill="#111"/><path d="M9.2 6.4h4.6" stroke="#1a1a1a" stroke-width="1.5"/></svg>
<svg style="position:absolute;left:41px;top:669px" width="16" height="16" viewBox="0 0 16 16"><path d="M1.6 5.2L9.6 4 10 2.2 14.5 1.2 14.6 12 4 14.8 1.8 13.6z" fill="url(#gfold)" stroke="#b88410" stroke-width="1.1" stroke-linejoin="round"/><path d="M1.8 5.4L4 6.4V14.6" stroke="#c89420" stroke-width="1" fill="none"/><path d="M4.2 6.4L14.2 4.6" stroke="#fff4b0" stroke-width="0.8"/></svg>
<div class="t" style="font-size:11px;line-height:16px;top:669.36px;transform:scaleX(0.9347);transform-origin:left center;letter-spacing:-0.300px;left:62px;">12. PROVOZ VOZIDEL, SLUŽEBNÍ CESTY</div>
<svg style="position:absolute;left:24px;top:687px" width="16" height="14" viewBox="0 0 16 14"><circle cx="5.6" cy="5.8" r="3.7" fill="#e4e4e4" stroke="#1a1a1a" stroke-width="1.2"/><circle cx="5.6" cy="5.8" r="1.2" fill="#111"/><path d="M9.2 6.4h4.6" stroke="#1a1a1a" stroke-width="1.5"/></svg>
<svg style="position:absolute;left:41px;top:685px" width="16" height="16" viewBox="0 0 16 16"><path d="M1.6 5.2L9.6 4 10 2.2 14.5 1.2 14.6 12 4 14.8 1.8 13.6z" fill="url(#gfold)" stroke="#b88410" stroke-width="1.1" stroke-linejoin="round"/><path d="M1.8 5.4L4 6.4V14.6" stroke="#c89420" stroke-width="1" fill="none"/><path d="M4.2 6.4L14.2 4.6" stroke="#fff4b0" stroke-width="0.8"/></svg>
<div class="t" style="font-size:11px;line-height:16px;top:685.36px;transform:scaleX(0.9455);transform-origin:left center;letter-spacing:-0.300px;left:62px;">13. REGISTR FIREM</div>
<svg style="position:absolute;left:24px;top:703px" width="16" height="14" viewBox="0 0 16 14"><circle cx="5.6" cy="5.8" r="3.7" fill="#e4e4e4" stroke="#1a1a1a" stroke-width="1.2"/><circle cx="5.6" cy="5.8" r="1.2" fill="#111"/><path d="M9.2 6.4h4.6" stroke="#1a1a1a" stroke-width="1.5"/></svg>
<svg style="position:absolute;left:41px;top:701px" width="16" height="16" viewBox="0 0 16 16"><path d="M1.6 5.2L9.6 4 10 2.2 14.5 1.2 14.6 12 4 14.8 1.8 13.6z" fill="url(#gfold)" stroke="#b88410" stroke-width="1.1" stroke-linejoin="round"/><path d="M1.8 5.4L4 6.4V14.6" stroke="#c89420" stroke-width="1" fill="none"/><path d="M4.2 6.4L14.2 4.6" stroke="#fff4b0" stroke-width="0.8"/></svg>
<div class="t" style="font-size:11px;line-height:16px;top:701.36px;transform:scaleX(0.9247);transform-origin:left center;letter-spacing:-0.300px;left:62px;">14. KANCELÁŘSKÝ SERVIS</div>
<svg style="position:absolute;left:24px;top:719px" width="16" height="14" viewBox="0 0 16 14"><circle cx="5.6" cy="5.8" r="3.7" fill="#e4e4e4" stroke="#1a1a1a" stroke-width="1.2"/><circle cx="5.6" cy="5.8" r="1.2" fill="#111"/><path d="M9.2 6.4h4.6" stroke="#1a1a1a" stroke-width="1.5"/></svg>
<svg style="position:absolute;left:41px;top:717px" width="16" height="16" viewBox="0 0 16 16"><path d="M1.6 5.2L9.6 4 10 2.2 14.5 1.2 14.6 12 4 14.8 1.8 13.6z" fill="url(#gfold)" stroke="#b88410" stroke-width="1.1" stroke-linejoin="round"/><path d="M1.8 5.4L4 6.4V14.6" stroke="#c89420" stroke-width="1" fill="none"/><path d="M4.2 6.4L14.2 4.6" stroke="#fff4b0" stroke-width="0.8"/></svg>
<div class="t" style="font-size:11px;line-height:16px;top:717.36px;transform:scaleX(0.9607);transform-origin:left center;letter-spacing:-0.300px;left:62px;">15. INFORMAČNÍ SERVIS</div>
<svg style="position:absolute;left:24px;top:735px" width="16" height="14" viewBox="0 0 16 14"><circle cx="5.6" cy="5.8" r="3.7" fill="#e4e4e4" stroke="#1a1a1a" stroke-width="1.2"/><circle cx="5.6" cy="5.8" r="1.2" fill="#111"/><path d="M9.2 6.4h4.6" stroke="#1a1a1a" stroke-width="1.5"/></svg>
<svg style="position:absolute;left:41px;top:733px" width="16" height="16" viewBox="0 0 16 16"><path d="M1.6 5.2L9.6 4 10 2.2 14.5 1.2 14.6 12 4 14.8 1.8 13.6z" fill="url(#gfold)" stroke="#b88410" stroke-width="1.1" stroke-linejoin="round"/><path d="M1.8 5.4L4 6.4V14.6" stroke="#c89420" stroke-width="1" fill="none"/><path d="M4.2 6.4L14.2 4.6" stroke="#fff4b0" stroke-width="0.8"/></svg>
<div class="t" style="font-size:11px;line-height:16px;top:733.36px;transform:scaleX(0.9421);transform-origin:left center;letter-spacing:-0.300px;left:62px;">16. SPRÁVA DOKUMENTŮ</div>
<svg style="position:absolute;left:24px;top:751px" width="16" height="14" viewBox="0 0 16 14"><circle cx="5.6" cy="5.8" r="3.7" fill="#e4e4e4" stroke="#1a1a1a" stroke-width="1.2"/><circle cx="5.6" cy="5.8" r="1.2" fill="#111"/><path d="M9.2 6.4h4.6" stroke="#1a1a1a" stroke-width="1.5"/></svg>
<svg style="position:absolute;left:41px;top:749px" width="16" height="16" viewBox="0 0 16 16"><path d="M1.6 5.2L9.6 4 10 2.2 14.5 1.2 14.6 12 4 14.8 1.8 13.6z" fill="url(#gfold)" stroke="#b88410" stroke-width="1.1" stroke-linejoin="round"/><path d="M1.8 5.4L4 6.4V14.6" stroke="#c89420" stroke-width="1" fill="none"/><path d="M4.2 6.4L14.2 4.6" stroke="#fff4b0" stroke-width="0.8"/></svg>
<div class="t" style="font-size:11px;line-height:16px;top:749.36px;transform:scaleX(0.9312);transform-origin:left center;letter-spacing:-0.300px;left:62px;">17. DÁVKOVÉ ÚLOHY</div>
<svg style="position:absolute;left:24px;top:767px" width="16" height="14" viewBox="0 0 16 14"><circle cx="5.6" cy="5.8" r="3.7" fill="#e4e4e4" stroke="#1a1a1a" stroke-width="1.2"/><circle cx="5.6" cy="5.8" r="1.2" fill="#111"/><path d="M9.2 6.4h4.6" stroke="#1a1a1a" stroke-width="1.5"/></svg>
<svg style="position:absolute;left:41px;top:765px" width="16" height="16" viewBox="0 0 16 16"><path d="M1.6 5.2L9.6 4 10 2.2 14.5 1.2 14.6 12 4 14.8 1.8 13.6z" fill="url(#gfold)" stroke="#b88410" stroke-width="1.1" stroke-linejoin="round"/><path d="M1.8 5.4L4 6.4V14.6" stroke="#c89420" stroke-width="1" fill="none"/><path d="M4.2 6.4L14.2 4.6" stroke="#fff4b0" stroke-width="0.8"/></svg>
<div class="t" style="font-size:11px;line-height:16px;top:765.36px;transform:scaleX(0.9844);transform-origin:left center;letter-spacing:-0.300px;left:62px;">18. ARCHIVACE</div>
<svg style="position:absolute;left:24px;top:783px" width="16" height="14" viewBox="0 0 16 14"><circle cx="5.6" cy="5.8" r="3.7" fill="#e4e4e4" stroke="#1a1a1a" stroke-width="1.2"/><circle cx="5.6" cy="5.8" r="1.2" fill="#111"/><path d="M9.2 6.4h4.6" stroke="#1a1a1a" stroke-width="1.5"/></svg>
<svg style="position:absolute;left:41px;top:781px" width="16" height="16" viewBox="0 0 16 16"><path d="M1.6 5.2L9.6 4 10 2.2 14.5 1.2 14.6 12 4 14.8 1.8 13.6z" fill="url(#gfold)" stroke="#b88410" stroke-width="1.1" stroke-linejoin="round"/><path d="M1.8 5.4L4 6.4V14.6" stroke="#c89420" stroke-width="1" fill="none"/><path d="M4.2 6.4L14.2 4.6" stroke="#fff4b0" stroke-width="0.8"/></svg>
<div class="t" style="font-size:11px;line-height:16px;top:781.36px;transform:scaleX(0.9538);transform-origin:left center;letter-spacing:-0.300px;left:62px;">19. SPRÁVA PARAMETRŮ</div>
<svg style="position:absolute;left:24px;top:799px" width="16" height="14" viewBox="0 0 16 14"><circle cx="5.6" cy="5.8" r="3.7" fill="#e4e4e4" stroke="#1a1a1a" stroke-width="1.2"/><circle cx="5.6" cy="5.8" r="1.2" fill="#111"/><path d="M9.2 6.4h4.6" stroke="#1a1a1a" stroke-width="1.5"/></svg>
<svg style="position:absolute;left:41px;top:797px" width="16" height="16" viewBox="0 0 16 16"><path d="M1.6 5.2L9.6 4 10 2.2 14.5 1.2 14.6 12 4 14.8 1.8 13.6z" fill="url(#gfold)" stroke="#b88410" stroke-width="1.1" stroke-linejoin="round"/><path d="M1.8 5.4L4 6.4V14.6" stroke="#c89420" stroke-width="1" fill="none"/><path d="M4.2 6.4L14.2 4.6" stroke="#fff4b0" stroke-width="0.8"/></svg>
<div class="t" style="font-size:11px;line-height:16px;top:797.36px;transform:scaleX(0.9343);transform-origin:left center;letter-spacing:-0.300px;left:62px;">20. SPRÁVA SYSTÉMU</div>
<svg style="position:absolute;left:24px;top:815px" width="16" height="14" viewBox="0 0 16 14"><circle cx="5.6" cy="5.8" r="3.7" fill="#e4e4e4" stroke="#1a1a1a" stroke-width="1.2"/><circle cx="5.6" cy="5.8" r="1.2" fill="#111"/><path d="M9.2 6.4h4.6" stroke="#1a1a1a" stroke-width="1.5"/></svg>
<svg style="position:absolute;left:41px;top:813px" width="16" height="16" viewBox="0 0 16 16"><path d="M1.6 5.2L9.6 4 10 2.2 14.5 1.2 14.6 12 4 14.8 1.8 13.6z" fill="url(#gfold)" stroke="#b88410" stroke-width="1.1" stroke-linejoin="round"/><path d="M1.8 5.4L4 6.4V14.6" stroke="#c89420" stroke-width="1" fill="none"/><path d="M4.2 6.4L14.2 4.6" stroke="#fff4b0" stroke-width="0.8"/></svg>
<div class="t" style="font-size:11px;line-height:16px;top:813.36px;transform:scaleX(0.9761);transform-origin:left center;letter-spacing:-0.300px;left:62px;">21. SPRÁVA ADMINISTRÁTORA</div>
<svg style="position:absolute;left:24px;top:831px" width="16" height="14" viewBox="0 0 16 14"><circle cx="5.6" cy="5.8" r="3.7" fill="#e4e4e4" stroke="#1a1a1a" stroke-width="1.2"/><circle cx="5.6" cy="5.8" r="1.2" fill="#111"/><path d="M9.2 6.4h4.6" stroke="#1a1a1a" stroke-width="1.5"/></svg>
<svg style="position:absolute;left:41px;top:829px" width="16" height="16" viewBox="0 0 16 16"><path d="M1.6 5.2L9.6 4 10 2.2 14.5 1.2 14.6 12 4 14.8 1.8 13.6z" fill="url(#gfold)" stroke="#b88410" stroke-width="1.1" stroke-linejoin="round"/><path d="M1.8 5.4L4 6.4V14.6" stroke="#c89420" stroke-width="1" fill="none"/><path d="M4.2 6.4L14.2 4.6" stroke="#fff4b0" stroke-width="0.8"/></svg>
<div class="t" style="font-size:11px;line-height:16px;top:829.36px;transform:scaleX(0.9623);transform-origin:left center;letter-spacing:-0.300px;left:62px;">22. UŽIVATELSKÉ NASTAVENÍ</div>
<svg style="position:absolute;left:24px;top:847px" width="16" height="14" viewBox="0 0 16 14"><circle cx="5.6" cy="5.8" r="3.7" fill="#e4e4e4" stroke="#1a1a1a" stroke-width="1.2"/><circle cx="5.6" cy="5.8" r="1.2" fill="#111"/><path d="M9.2 6.4h4.6" stroke="#1a1a1a" stroke-width="1.5"/></svg>
<svg style="position:absolute;left:41px;top:845px" width="16" height="16" viewBox="0 0 16 16"><path d="M1.6 5.2L9.6 4 10 2.2 14.5 1.2 14.6 12 4 14.8 1.8 13.6z" fill="url(#gfold)" stroke="#b88410" stroke-width="1.1" stroke-linejoin="round"/><path d="M1.8 5.4L4 6.4V14.6" stroke="#c89420" stroke-width="1" fill="none"/><path d="M4.2 6.4L14.2 4.6" stroke="#fff4b0" stroke-width="0.8"/></svg>
<div class="t" style="font-size:11px;line-height:16px;top:845.36px;transform:scaleX(1.0000);transform-origin:left center;letter-spacing:-0.300px;left:62px;">23. OSTATNI naše APSO</div>
<div style="left:306px;top:69px;width:849px;height:823px;background:#95abce;"></div>
<div style="left:306px;top:70px;width:849px;height:21px;background:linear-gradient(#bccbe4 0px,#b6c6e1 4px,#a6b9da 12px,#95abce 20px);"></div>
<div style="left:306px;top:69px;width:849px;height:1px;background:#d2ddf0;"></div>
<div style="left:306px;top:69px;width:1px;height:823px;background:#d2ddf0;"></div>
<div style="left:1154px;top:69px;width:1px;height:823px;background:#7388aa;"></div>
<div style="left:306px;top:891px;width:849px;height:1px;background:#7388aa;"></div>
<div style="left:310px;top:90px;width:841px;height:1px;background:#7a90b5;"></div>
<div style="left:310px;top:90px;width:1px;height:798px;background:#7a90b5;"></div>
<div style="left:1150px;top:91px;width:1px;height:797px;background:#d2ddf0;opacity:0.5;"></div>
<div style="left:1151px;top:888px;width:2px;height:2px;background:#5a6a8a;"></div>
<div style="left:1152px;top:889px;width:2px;height:2px;background:#d8e2f2;"></div>
<div style="left:1146px;top:888px;width:2px;height:2px;background:#5a6a8a;"></div>
<div style="left:1147px;top:889px;width:2px;height:2px;background:#d8e2f2;"></div>
<div style="left:1151px;top:883px;width:2px;height:2px;background:#5a6a8a;"></div>
<div style="left:1152px;top:884px;width:2px;height:2px;background:#d8e2f2;"></div>
<div style="left:307px;top:888px;width:2px;height:2px;background:#5a6a8a;"></div>
<div style="left:308px;top:889px;width:2px;height:2px;background:#d8e2f2;"></div>
<div style="left:312px;top:888px;width:2px;height:2px;background:#5a6a8a;"></div>
<div style="left:313px;top:889px;width:2px;height:2px;background:#d8e2f2;"></div>
<div style="left:307px;top:883px;width:2px;height:2px;background:#5a6a8a;"></div>
<div style="left:308px;top:884px;width:2px;height:2px;background:#d8e2f2;"></div>
<div class="t" style="font-size:11.5px;line-height:16px;top:72.20px;letter-spacing:0.313px;font-weight:bold;left:333px;color:#1a1a1a;">Sezení z 07:00 11/01/2018 - DEMO db</div>
<svg style="position:absolute;left:313px;top:72px" width="16" height="16" viewBox="0 0 16 16"><rect x="1" y="1" width="7.5" height="6.5" fill="#4a78d8" stroke="#2a3c8a" stroke-width="0.8"/><rect x="2" y="2" width="5.5" height="3" fill="#7aa8f0"/><path d="M4.5 7.5v5.5h3" stroke="#6a6a6a" fill="none" stroke-width="1.3"/><rect x="7" y="6.5" width="8.2" height="6.5" fill="#4aa8f4" stroke="#4a4a4a" stroke-width="0.8"/><path d="M8 14.5h6" stroke="#777" stroke-width="1.3"/></svg>
<div style="left:551px;top:74px;width:535px;height:1px;background:rgba(80,100,150,0.13);"></div>
<div style="left:551px;top:78px;width:535px;height:1px;background:rgba(80,100,150,0.13);"></div>
<div style="left:551px;top:82px;width:535px;height:1px;background:rgba(80,100,150,0.13);"></div>
<div style="left:551px;top:86px;width:535px;height:1px;background:rgba(80,100,150,0.13);"></div>
<div style="left:1095px;top:72px;width:15px;height:15px;background:linear-gradient(135deg,#b4c0d4,#7e8da8 50%,#56678a);border:1px solid #5a6884;border-radius:2px;box-shadow:1px 1px 0 rgba(255,255,255,0.45);"></div>
<svg style="position:absolute;left:1097px;top:74px" width="11" height="11" viewBox="0 0 11 11"><g transform="translate(0.8,0.8)" opacity="0.55"><path d="M8 2L3 7M2.2 3.5v5.3h5.3" stroke="#000" stroke-width="2.4" fill="none"/></g><path d="M8 2L3 7M2.2 3.5v5.3h5.3" stroke="#fff" stroke-width="2.4" fill="none"/></svg>
<div style="left:1113px;top:72px;width:15px;height:15px;background:linear-gradient(135deg,#b4c0d4,#7e8da8 50%,#56678a);border:1px solid #5a6884;border-radius:2px;box-shadow:1px 1px 0 rgba(255,255,255,0.45);"></div>
<svg style="position:absolute;left:1115px;top:74px" width="11" height="11" viewBox="0 0 11 11"><g transform="translate(0.8,0.8)" opacity="0.55"><path d="M2 8L7 3M2.7 2.2h5.3v5.3" stroke="#000" stroke-width="2.4" fill="none"/></g><path d="M2 8L7 3M2.7 2.2h5.3v5.3" stroke="#fff" stroke-width="2.4" fill="none"/></svg>
<div style="left:1131px;top:72px;width:15px;height:15px;background:linear-gradient(135deg,#f0a088,#d06a5a 50%,#b4504c);border:1px solid #8a5a5a;border-radius:2px;box-shadow:1px 1px 0 rgba(255,255,255,0.45);"></div>
<svg style="position:absolute;left:1133px;top:74px" width="11" height="11" viewBox="0 0 11 11"><g transform="translate(0.8,0.8)" opacity="0.55"><path d="M2 2L8 8M8 2L2 8" stroke="#000" stroke-width="2.4" stroke-linecap="square"/></g><path d="M2 2L8 8M8 2L2 8" stroke="#fff" stroke-width="2.4" stroke-linecap="square"/></svg>
<div style="left:311px;top:91px;width:839px;height:795px;background:#f0eee3;"></div>
<div style="left:311px;top:91px;width:839px;height:21px;background:linear-gradient(#fdfaea 0px,#f3f1e4 1px,#e9e6d6 20px);"></div>
<div style="left:311px;top:111px;width:839px;height:1px;background:#cdcab6;"></div>
<div class="t" style="font-size:11px;line-height:16px;top:94.36px;transform:scaleX(0.9754);transform-origin:left center;letter-spacing:-0.300px;left:320px;"><u>Z</u>áznam</div>
<div class="t" style="font-size:11px;line-height:16px;top:94.36px;transform:scaleX(0.9988);transform-origin:left center;letter-spacing:-0.300px;left:371px;color:#b0aa94;">Úpr<u style="border-color:#b4ae98">a</u>vy</div>
<div class="t" style="font-size:11px;line-height:16px;top:94.36px;letter-spacing:-0.035px;left:420px;"><u>F</u>unkce [0]</div>
<div class="t" style="font-size:11px;line-height:16px;top:94.36px;letter-spacing:-0.280px;left:485px;">Zo<u>b</u>razení</div>
<div class="t" style="font-size:11px;line-height:16px;top:94.36px;letter-spacing:0.005px;left:546px;">Nás<u>t</u>roje</div>
<div class="t" style="font-size:11px;line-height:16px;top:94.36px;transform:scaleX(0.9981);transform-origin:left center;letter-spacing:-0.300px;left:601px;"><u>P</u>rogram</div>
<div class="t" style="font-size:11px;line-height:16px;top:94.36px;letter-spacing:-0.268px;left:656px;">Náp<u>o</u>věda</div>
<div class="t" style="font-size:12px;line-height:16px;top:93.03px;font-weight:bold;left:1134px;color:#333;">×</div>
<div style="left:311px;top:112px;width:839px;height:24px;background:linear-gradient(#f8f6ea 0px,#f1efe3 1px,#e8e5d5 24px);"></div>
<div style="left:311px;top:135px;width:839px;height:1px;background:#cfccbb;"></div>
<svg style="position:absolute;left:316px;top:116px" width="16" height="16" viewBox="0 0 16 16"><path d="M0.8 8.5L6 4.3 9.5 5.6 14.5 9.2 13.5 12.5 9 10.8 4.5 12.6z" fill="#707070" stroke="#2e2e2e" stroke-width="0.9"/><path d="M2.5 8L6 5.3 8.5 6.2" stroke="#c8c8c8" stroke-width="0.9" fill="none"/><circle cx="5.2" cy="12" r="2.4" fill="#c4e4ff" stroke="#2e2e2e" stroke-width="0.9"/><circle cx="11" cy="12.2" r="2.4" fill="#c4e4ff" stroke="#2e2e2e" stroke-width="0.9"/></svg>
<svg style="position:absolute;left:337px;top:116px" width="16" height="16" viewBox="0 0 16 16"><path d="M2.2 2h4.2v5.5h2.8L4.3 12.6 -0.6 7.5h2.8z" fill="#3a94ef" stroke="#1560c0" stroke-width="0.7"/><text x="12" y="7.2" font-size="7.5" font-weight="bold" font-family="Liberation Sans" fill="#138a2a" text-anchor="middle">A</text><text x="12" y="15.5" font-size="7.5" font-weight="bold" font-family="Liberation Sans" fill="#138a2a" text-anchor="middle">Z</text></svg>
<svg style="position:absolute;left:358px;top:116px" width="16" height="16" viewBox="0 0 16 16"><path d="M2.5 10.5C2 6 5 3.5 9 3.5" stroke="#2a9a2a" stroke-width="2.8" fill="none"/><path d="M8 0.5l5 3-5 3.3z" fill="#2a9a2a"/><path d="M13.5 5.5C14.5 10 12 13 8 13" stroke="#f04a14" stroke-width="2.8" fill="none"/><path d="M9 10l-5 3 5 3z" fill="#f04a14"/></svg>
<svg style="position:absolute;left:379px;top:116px" width="16" height="16" viewBox="0 0 16 16"><path d="M1.5 2.5h13l-4.8 6v6l-3.4 1V8.5z" fill="#a3a29a"/><ellipse cx="8" cy="3" rx="6.5" ry="1.6" fill="#b8b7b0"/></svg>
<svg style="position:absolute;left:400px;top:116px" width="16" height="16" viewBox="0 0 16 16"><path d="M4.5 1l6 0.5 -0.5 5H4z" fill="#fff" stroke="#9a9a9a" stroke-width="0.8"/><path d="M1 7.5L5 5.5h8l2.5 2.5v4.5L12 14.5H3.5L1 12z" fill="#e6e6e6" stroke="#5a5a5a" stroke-width="0.9"/><path d="M1.5 11h13" stroke="#fff" stroke-width="1.2"/><circle cx="12.5" cy="9" r="0.8" fill="#2a9a2a"/></svg>
<svg style="position:absolute;left:421px;top:116px" width="16" height="16" viewBox="0 0 16 16"><path d="M1 10l4-2.5h6.5l3.5 2.5v3L11 15H4L1 13z" fill="#e0e0e0" stroke="#5a5a5a" stroke-width="0.9"/><path d="M8 0.8l4.8 4.8H10v4.6H6V5.6H3.2z" fill="#3cc03c" stroke="#1a801a" stroke-width="0.7"/></svg>
<svg style="position:absolute;left:442px;top:116px" width="16" height="16" viewBox="0 0 16 16"><path d="M0.8 8.5L6 4.3 9.5 5.6 14.5 9.2 13.5 12.5 9 10.8 4.5 12.6z" fill="#707070" stroke="#2e2e2e" stroke-width="0.9"/><path d="M2.5 8L6 5.3 8.5 6.2" stroke="#c8c8c8" stroke-width="0.9" fill="none"/><circle cx="5.2" cy="12" r="2.4" fill="#c4e4ff" stroke="#2e2e2e" stroke-width="0.9"/><circle cx="11" cy="12.2" r="2.4" fill="#c4e4ff" stroke="#2e2e2e" stroke-width="0.9"/><path d="M9 2.5h3V0.6l3.6 3.1-3.6 3.1V5H9z" fill="#f04010" stroke="#b02000" stroke-width="0.5"/></svg>
<svg style="position:absolute;left:463px;top:116px" width="16" height="16" viewBox="0 0 16 16"><path d="M0.8 8.5L6 4.3 9.5 5.6 14.5 9.2 13.5 12.5 9 10.8 4.5 12.6z" fill="#707070" stroke="#2e2e2e" stroke-width="0.9"/><path d="M2.5 8L6 5.3 8.5 6.2" stroke="#c8c8c8" stroke-width="0.9" fill="none"/><circle cx="5.2" cy="12" r="2.4" fill="#c4e4ff" stroke="#2e2e2e" stroke-width="0.9"/><circle cx="11" cy="12.2" r="2.4" fill="#c4e4ff" stroke="#2e2e2e" stroke-width="0.9"/><path d="M7.5 2.5h-3V0.6L0.9 3.7 4.5 6.8V5h3z" fill="#f04010" stroke="#b02000" stroke-width="0.5"/></svg>
<svg style="position:absolute;left:485px;top:116px" width="16" height="16" viewBox="0 0 16 16"><path d="M0.8 8.5L6 4.3 9.5 5.6 14.5 9.2 13.5 12.5 9 10.8 4.5 12.6z" fill="#707070" stroke="#2e2e2e" stroke-width="0.9"/><path d="M2.5 8L6 5.3 8.5 6.2" stroke="#c8c8c8" stroke-width="0.9" fill="none"/><circle cx="5.2" cy="12" r="2.4" fill="#c4e4ff" stroke="#2e2e2e" stroke-width="0.9"/><circle cx="11" cy="12.2" r="2.4" fill="#c4e4ff" stroke="#2e2e2e" stroke-width="0.9"/><path d="M8 2.5h3V0.6l3.6 3.1-3.6 3.1V5H8z" fill="#22b022" stroke="#107010" stroke-width="0.5"/></svg>
<svg style="position:absolute;left:506px;top:116px" width="16" height="16" viewBox="0 0 16 16"><path d="M0.8 3.5h12.5l-4.7 5.5v5.5l-3 1.2V9z" fill="#bdbdbd" stroke="#4a4a4a" stroke-width="0.9"/><ellipse cx="7" cy="3.6" rx="6.2" ry="1.7" fill="#f4f4f4" stroke="#4a4a4a" stroke-width="0.8"/><path d="M9.5 0.5h2.5l3.5 3-3.2 3-0.3-1.8H9.5z" fill="#f04010"/></svg>
<svg style="position:absolute;left:534px;top:116px" width="16" height="16" viewBox="0 0 16 16"><path d="M4.5 13V9a4 4 0 0 1 8 0v4.5" stroke="#a3a29a" stroke-width="3.2" fill="none"/><path d="M0.5 7.5l4 5.5 4-5.5z" fill="#a3a29a"/></svg>
<svg style="position:absolute;left:555px;top:116px" width="16" height="16" viewBox="0 0 16 16"><path d="M11.5 13V9a4 4 0 0 0-8 0v4.5" stroke="#a3a29a" stroke-width="3.2" fill="none"/><path d="M15.5 7.5l-4 5.5-4-5.5z" fill="#a3a29a"/></svg>
<svg style="position:absolute;left:576px;top:116px" width="16" height="16" viewBox="0 0 16 16"><path d="M1 7h8M7 1.5v10" stroke="#a3a29a" stroke-width="2.6"/><circle cx="11.5" cy="10.5" r="2.6" fill="none" stroke="#a3a29a" stroke-width="2"/><circle cx="7" cy="13" r="2" fill="#a3a29a"/></svg>
<svg style="position:absolute;left:597px;top:116px" width="16" height="16" viewBox="0 0 16 16"><path d="M1.5 1.5h6l2 2v8h-8z" fill="#a3a29a"/><path d="M6 5h6l2.5 2.5V15H6z" fill="#b3b2ab" stroke="#8e8d86" stroke-width="0.9"/></svg>
<svg style="position:absolute;left:619px;top:116px" width="16" height="16" viewBox="0 0 16 16"><rect x="1.5" y="3" width="12" height="12.5" rx="1" fill="#a3a29a"/><rect x="4.5" y="1.2" width="6" height="3.2" fill="#8e8d86"/><rect x="4" y="6.5" width="7" height="8" fill="#b9b8b1"/></svg>
<svg style="position:absolute;left:640px;top:116px" width="16" height="16" viewBox="0 0 16 16"><path d="M2 4.5L8.5 1.5 15 5 9.5 9z" fill="#a3a29a"/><path d="M2 4.5L9.5 9l0 1.5L2 6z" fill="#8e8d86"/><text x="8" y="15.5" font-size="6.5" font-family="Liberation Serif" font-style="italic" font-weight="bold" fill="#8e8d86" text-anchor="middle">ABC</text></svg>
<svg style="position:absolute;left:668px;top:116px" width="16" height="16" viewBox="0 0 16 16"><path d="M2.5 1.5h7l3.5 3.5v10.5H2.5z" fill="#fff" stroke="#3d5fa8" stroke-width="1"/><circle cx="7.3" cy="8.3" r="3" fill="#bfe2ff" stroke="#3a6ab0" stroke-width="1.1"/><path d="M9.6 10.6l3.2 3.4" stroke="#f07a20" stroke-width="2"/></svg>
<svg style="position:absolute;left:689px;top:116px" width="16" height="16" viewBox="0 0 16 16"><path d="M1 2h6l2 2v9H1z" fill="#a3a29a"/><path d="M6 4h6l2.5 2.5V15H6z" fill="#b3b2ab" stroke="#8e8d86" stroke-width="0.9"/></svg>
<svg style="position:absolute;left:718px;top:116px" width="16" height="16" viewBox="0 0 16 16"><path d="M3.5 8C3 2.5 5 0.8 8 0.8s5 1.7 4.5 7.2z" fill="#e8b42a" stroke="#a87810" stroke-width="0.7"/><ellipse cx="8" cy="6.5" rx="3" ry="3.6" fill="#fbc89a"/><path d="M1.8 15.5C2 11 4.5 10 8 10s6 1 6.2 5.5z" fill="#2a62c8" stroke="#163e8a" stroke-width="0.7"/><path d="M7 10.5l1 2 1-2" stroke="#fff" stroke-width="0.8" fill="none"/></svg>
<svg style="position:absolute;left:739px;top:116px" width="16" height="16" viewBox="0 0 16 16"><path d="M2.5 4.5L7 3.5 7.5 1.8 13.8 0.8 14.2 11.5 3.5 14.5z" fill="#f2d468" stroke="#b88a10" stroke-width="1"/><path d="M0.8 6.5L11 5 14.5 12 4 15.2z" fill="url(#gfold)" stroke="#b88a10" stroke-width="1"/></svg>
<svg style="position:absolute;left:760px;top:116px" width="16" height="16" viewBox="0 0 16 16"><circle cx="6" cy="6" r="4.6" fill="#c4e6ff" stroke="#5a86b0" stroke-width="1.4"/><path d="M4 3.5a3 3 0 0 1 3-0.8" stroke="#fff" stroke-width="1" fill="none"/><path d="M9.2 9.2l5.3 5.3" stroke="#d87828" stroke-width="2.8" stroke-linecap="round"/></svg>
<svg style="position:absolute;left:790px;top:116px" width="16" height="16" viewBox="0 0 16 16"><circle cx="8" cy="8" r="7.2" fill="#e8e8e8" stroke="#8a8a8a" stroke-width="0.7"/><circle cx="8" cy="8" r="5.8" fill="#23a023" stroke="#117011" stroke-width="0.6"/><text x="8" y="11.6" font-size="9.5" font-weight="bold" font-family="Liberation Sans" fill="#fff" text-anchor="middle">?</text></svg>
<svg style="position:absolute;left:811px;top:116px" width="16" height="16" viewBox="0 0 16 16"><path d="M8 1.2c4 0 7 2.5 7 5.8s-3 5.8-6 5.8l-2.5 2.7 0.5-2.9C4 12 1 10 1 7s3-5.8 7-5.8z" fill="#f2f5ff" stroke="#8a9ac8" stroke-width="0.9"/><circle cx="8" cy="3.8" r="1.2" fill="#1a58c8"/><path d="M6.5 5.8h2.3v4.6h1v1H6.5v-1h1V6.8h-1z" fill="#1a58c8"/></svg>
<div style="left:527px;top:117px;width:1px;height:15px;background:#c5c2b2;"></div>
<div style="left:528px;top:117px;width:1px;height:15px;background:#fff;"></div>
<div style="left:661px;top:117px;width:1px;height:15px;background:#c5c2b2;"></div>
<div style="left:662px;top:117px;width:1px;height:15px;background:#fff;"></div>
<div style="left:711px;top:117px;width:1px;height:15px;background:#c5c2b2;"></div>
<div style="left:712px;top:117px;width:1px;height:15px;background:#fff;"></div>
<div style="left:782px;top:117px;width:1px;height:15px;background:#c5c2b2;"></div>
<div style="left:783px;top:117px;width:1px;height:15px;background:#fff;"></div>
<div style="left:313px;top:160px;width:835px;height:676px;background:#f0eee3;border:1px solid #77756a;"></div>
<div style="left:314px;top:139px;width:166px;height:23px;background:#f3f1e7;border:1px solid #77756a;border-bottom:none;border-radius:3px 3px 0 0;"></div>
<div style="left:315px;top:140px;width:164px;height:1px;background:#fff;"></div>
<div style="left:315px;top:140px;width:1px;height:20px;background:#fff;"></div>
<div class="t" style="font-size:11px;line-height:16px;top:143.36px;letter-spacing:-0.076px;left:326px;">11.3. Opakované zakázky</div>
<svg style="position:absolute;left:461px;top:148px" width="8" height="8" viewBox="0 0 8 8"><path d="M1.2 1.2L6.8 6.8M6.8 1.2L1.2 6.8" stroke="#333" stroke-width="1.5"/></svg>
<div class="t" style="font-size:11px;line-height:16px;top:166.36px;letter-spacing:-0.198px;left:332px;">Kniha:</div>
<div style="left:374px;top:165px;width:30px;height:18px;background:#f0eee3;border:1px solid #7f7d70;border-radius:2px;"></div>
<div class="t" style="font-size:11px;line-height:16px;top:166.36px;transform:scaleX(0.8956);transform-origin:left center;letter-spacing:-0.300px;left:376px;">OPK</div>
<div style="left:406px;top:165px;width:238px;height:18px;background:#f0eee3;border:1px solid #7f7d70;border-radius:2px;"></div>
<div class="t" style="font-size:11px;line-height:16px;top:166.36px;letter-spacing:-0.120px;left:408px;">Opakované zakázky</div>
<div class="t" style="font-size:11px;line-height:16px;top:166.36px;letter-spacing:-0.000px;left:691px;">Filtr.stav:</div>
<div style="left:750px;top:165px;width:22px;height:18px;background:#f0eee3;border:1px solid #7f7d70;border-radius:2px;"></div>
<div style="left:773px;top:165px;width:159px;height:18px;background:#f0eee3;border:1px solid #7f7d70;border-radius:2px;"></div>
<div class="t" style="font-size:11px;line-height:16px;top:166.36px;transform:scaleX(0.9997);transform-origin:left center;letter-spacing:-0.300px;left:775px;">Všechny stavy</div>
<div style="left:318px;top:193px;width:825px;height:1px;background:#bebcae;"></div>
<div style="left:318px;top:205px;width:825px;height:481px;background:#fff;border:1px solid #7f7d70;"></div>
<div style="left:319px;top:206px;width:823px;height:20px;background:linear-gradient(#fefefd,#f2f1ea 60%,#e2e0d4);border-bottom:1px solid #b4b2a6;"></div>
<div style="left:319px;top:226px;width:823px;height:17px;background:#f9dd8f;border-bottom:1px solid #cfc39a;"></div>
<div style="left:374px;top:206px;width:1px;height:37px;background:#c9c6b6;"></div>
<div style="left:412px;top:206px;width:1px;height:37px;background:#c9c6b6;"></div>
<div style="left:714px;top:206px;width:1px;height:37px;background:#c9c6b6;"></div>
<div style="left:794px;top:206px;width:1px;height:37px;background:#c9c6b6;"></div>
<div style="left:874px;top:206px;width:1px;height:37px;background:#c9c6b6;"></div>
<div style="left:904px;top:206px;width:1px;height:37px;background:#c9c6b6;"></div>
<div style="left:942px;top:206px;width:1px;height:37px;background:#c9c6b6;"></div>
<div style="left:968px;top:206px;width:1px;height:37px;background:#c9c6b6;"></div>
<div style="left:994px;top:206px;width:1px;height:37px;background:#c9c6b6;"></div>
<div style="left:1028px;top:206px;width:1px;height:37px;background:#c9c6b6;"></div>
<div style="left:1046px;top:206px;width:1px;height:37px;background:#c9c6b6;"></div>
<svg style="position:absolute;left:339px;top:209px" width="9" height="11" viewBox="0 0 9 11"><path d="M4.5 0.5L8.5 5H6v5H3V5H.5z" fill="#3cc03c" stroke="#1e8a1e" stroke-width="0.6"/></svg>
<div class="t" style="font-size:11px;line-height:16px;top:208.36px;letter-spacing:-0.204px;left:350px;">I.čís.</div>
<div style="left:379px;top:215px;width:3px;height:3px;background:#a8a8a0;border-radius:2px;"></div>
<div class="t" style="font-size:11px;line-height:16px;top:208.36px;letter-spacing:-0.019px;left:386px;">Dr.</div>
<div style="left:416px;top:215px;width:3px;height:3px;background:#a8a8a0;border-radius:2px;"></div>
<div class="t" style="font-size:11px;line-height:16px;top:208.36px;letter-spacing:-0.228px;left:425px;">Název zakázky</div>
<div style="left:718px;top:215px;width:3px;height:3px;background:#a8a8a0;border-radius:2px;"></div>
<div class="t" style="font-size:11px;line-height:16px;top:208.36px;letter-spacing:-0.207px;left:727px;">Ze dne</div>
<div style="left:799px;top:215px;width:3px;height:3px;background:#a8a8a0;border-radius:2px;"></div>
<div class="t" style="font-size:11px;line-height:16px;top:208.36px;letter-spacing:-0.161px;left:806px;">Dat.spl.</div>
<div style="left:878px;top:215px;width:3px;height:3px;background:#a8a8a0;border-radius:2px;"></div>
<div class="t" style="font-size:11px;line-height:16px;top:208.36px;transform:scaleX(0.8526);transform-origin:left center;letter-spacing:-0.300px;left:886px;">S</div>
<div style="left:907px;top:215px;width:3px;height:3px;background:#a8a8a0;border-radius:2px;"></div>
<div class="t" style="font-size:11px;line-height:16px;top:208.36px;transform:scaleX(0.9750);transform-origin:left center;letter-spacing:-0.300px;left:916px;">Fak</div>
<div class="t" style="font-size:11px;line-height:16px;top:208.36px;letter-spacing:0.191px;left:943px;">Te</div>
<div class="t" style="font-size:11px;line-height:16px;top:208.36px;transform:scaleX(0.9810);transform-origin:left center;letter-spacing:-0.300px;left:968px;">Ti</div>
<div class="t" style="font-size:11px;line-height:16px;top:208.36px;transform:scaleX(0.8526);transform-origin:right center;letter-spacing:-0.300px;right:374px;">PP</div>
<div class="t" style="font-size:11px;line-height:16px;top:208.36px;transform:scaleX(0.7790);transform-origin:left center;letter-spacing:-0.300px;left:1029px;">F</div>
<div style="left:1077px;top:215px;width:3px;height:3px;background:#a8a8a0;border-radius:2px;"></div>
<div class="t" style="font-size:11px;line-height:16px;top:208.36px;transform:scaleX(0.9611);transform-origin:left center;letter-spacing:-0.300px;left:1086px;">Smluvní cen</div>
<div class="t" style="font-size:11px;line-height:16px;top:226.36px;letter-spacing:-0.117px;right:1030px;">0000001</div>
<div class="t" style="font-size:11px;line-height:16px;top:226.36px;transform:scaleX(0.9434);transform-origin:left center;letter-spacing:-0.300px;left:376px;">CO</div>
<div class="t" style="font-size:11px;line-height:16px;top:226.36px;letter-spacing:-0.038px;left:413px;">Test opakované zakázky</div>
<div class="t" style="font-size:11px;line-height:16px;top:226.36px;letter-spacing:0.095px;left:716px;">02/07/2013</div>
<div class="t" style="font-size:11px;line-height:16px;top:226.36px;letter-spacing:0.095px;left:796px;">27/08/2013</div>
<div class="t" style="font-size:11px;line-height:16px;top:226.36px;transform:scaleX(0.9947);transform-origin:left center;letter-spacing:-0.300px;left:876px;">A</div>
<div class="t" style="font-size:11px;line-height:16px;top:226.36px;transform:scaleX(0.9591);transform-origin:left center;letter-spacing:-0.300px;left:905px;">ANO</div>
<div class="t" style="font-size:11px;line-height:16px;top:226.36px;letter-spacing:-0.117px;right:376px;">5</div>
<div style="left:1090px;top:226px;width:52px;height:16px;overflow:hidden;"><div class="t" style="right:-4px;top:0.2px;font-size:11px;line-height:16px;letter-spacing:0.3px;">677.00</div></div>
<div style="left:319px;top:670px;width:823px;height:15px;background:linear-gradient(#e9e7dc,#f2f1ea 50%,#fbfaf6);"></div>
<div style="left:319px;top:670px;width:15px;height:15px;background:linear-gradient(#fdfdfb,#e6e4da);border:1px solid #a9a79a;border-radius:2px;"></div>
<svg style="position:absolute;left:323px;top:673px" width="7" height="9" viewBox="0 0 7 9"><path d="M5 1v7L1.5 4.5z" fill="#333"/></svg>
<div style="left:335px;top:670px;width:499px;height:15px;background:linear-gradient(#9cb8e2,#a9c2e6 35%,#94b0da 70%,#84a2d0);border:1px solid #60708a;border-left:1px solid #c8d8f0;border-bottom:none;border-radius:0 2px 0 0;"></div>
<div style="left:579px;top:674px;width:1px;height:7px;background:#e8f0fc;"></div>
<div style="left:581px;top:674px;width:1px;height:7px;background:#e8f0fc;"></div>
<div style="left:583px;top:674px;width:1px;height:7px;background:#e8f0fc;"></div>
<div style="left:585px;top:674px;width:1px;height:7px;background:#e8f0fc;"></div>
<div style="left:587px;top:674px;width:1px;height:7px;background:#e8f0fc;"></div>
<div style="left:1126px;top:670px;width:15px;height:15px;background:linear-gradient(#fdfdfb,#e6e4da);border:1px solid #a9a79a;border-radius:2px;"></div>
<svg style="position:absolute;left:1131px;top:673px" width="7" height="9" viewBox="0 0 7 9"><path d="M2 1v7l3.5-3.5z" fill="#333"/></svg>
<div style="left:319px;top:685px;width:823px;height:1px;background:#7f7d70;"></div>
<div style="left:318px;top:696px;width:825px;height:1px;background:#bebcae;"></div>
<div class="t" style="font-size:11px;line-height:16px;top:709.36px;letter-spacing:-0.198px;right:977px;">Čís.zak.:</div>
<div style="left:438px;top:708px;width:94px;height:18px;background:#f0eee3;border:1px solid #7f7d70;border-radius:2px;"></div>
<div style="left:541px;top:708px;width:279px;height:18px;background:#f0eee3;border:1px solid #7f7d70;border-radius:2px;"></div>
<div class="t" style="font-size:11px;line-height:16px;top:729.36px;letter-spacing:0.046px;right:977px;">Int.čís.org.:</div>
<div style="left:438px;top:728px;width:46px;height:18px;background:#f0eee3;border:1px solid #7f7d70;border-radius:2px;"></div>
<div class="t" style="font-size:11px;line-height:16px;top:729.36px;letter-spacing:-0.117px;right:923px;">6</div>
<div class="t" style="font-size:11px;line-height:16px;top:729.36px;letter-spacing:-0.169px;right:809px;">Kratší název:</div>
<div style="left:606px;top:728px;width:158px;height:18px;background:#f0eee3;border:1px solid #7f7d70;border-radius:2px;"></div>
<div class="t" style="font-size:11px;line-height:16px;top:729.36px;transform:scaleX(0.9220);transform-origin:left center;letter-spacing:-0.300px;left:608px;">Milan HŘEBEC</div>
<div class="t" style="font-size:11px;line-height:16px;top:749.36px;letter-spacing:-0.165px;right:977px;">Číslo objed.:</div>
<div style="left:438px;top:748px;width:158px;height:18px;background:#f0eee3;border:1px solid #7f7d70;border-radius:2px;"></div>
<div class="t" style="font-size:11px;line-height:16px;top:749.36px;letter-spacing:0.082px;left:440px;">tel.</div>
<div class="t" style="font-size:11px;line-height:16px;top:749.36px;letter-spacing:-0.043px;right:745px;">Ze dne:</div>
<div style="left:669px;top:748px;width:79px;height:18px;background:#f0eee3;border:1px solid #7f7d70;border-radius:2px;"></div>
<div class="t" style="font-size:11px;line-height:16px;top:749.36px;letter-spacing:0.095px;left:671px;">02/07/2013</div>
<div class="t" style="font-size:11px;line-height:16px;top:749.36px;transform:scaleX(0.9773);transform-origin:right center;letter-spacing:-0.300px;right:513px;">Sled. avízem?:</div>
<div style="left:901px;top:748px;width:31px;height:18px;background:#f0eee3;border:1px solid #7f7d70;border-radius:2px;"></div>
<div class="t" style="font-size:11px;line-height:16px;top:749.36px;letter-spacing:-0.190px;left:903px;">Ano</div>
<div class="t" style="font-size:11px;line-height:16px;top:769.36px;letter-spacing:0.238px;right:977px;">Vznik =&gt;:</div>
<div style="left:438px;top:768px;width:318px;height:18px;background:#f0eee3;border:1px solid #7f7d70;border-radius:2px;"></div>
<div class="t" style="font-size:11px;line-height:16px;top:789.36px;letter-spacing:-0.225px;right:1017px;">Poznámka:</div>
<div style="left:398px;top:788px;width:526px;height:18px;background:#f0eee3;border:1px solid #7f7d70;border-radius:2px;"></div>
<div class="t" style="font-size:11px;line-height:16px;top:809.36px;letter-spacing:-0.242px;right:993px;">Datum změny:</div>
<div style="left:422px;top:808px;width:78px;height:18px;background:#f0eee3;border:1px solid #7f7d70;border-radius:2px;"></div>
<div class="t" style="font-size:11px;line-height:16px;top:809.36px;letter-spacing:0.095px;left:424px;">02/07/2013</div>
<div class="t" style="font-size:11px;line-height:16px;top:809.36px;letter-spacing:-0.131px;right:585px;">Uživatel:</div>
<div style="left:830px;top:808px;width:94px;height:18px;background:#f0eee3;border:1px solid #7f7d70;border-radius:2px;"></div>
<div class="t" style="font-size:11px;line-height:16px;top:809.36px;letter-spacing:-0.085px;left:832px;">olru</div>
<div style="left:311px;top:838px;width:837px;height:1px;background:#fff;"></div>
<div style="left:316px;top:844px;width:71px;height:18px;background:linear-gradient(#fdfdfb,#efede4 60%,#dedbcd);border:1px solid #8a887a;border-radius:3px;"></div>
<svg style="position:absolute;left:320px;top:845px" width="16" height="16" viewBox="0 0 16 16"><path d="M2.5 1.5h7.5l3 3v10.5h-10.5z" fill="#fff" stroke="#7a88b4" stroke-width="1"/><rect x="4" y="7" width="7.5" height="6.5" fill="#c0cae6"/><rect x="4" y="5" width="7.5" height="0.9" fill="#aab6d8"/><path d="M10 1.5v3h3" fill="#e0e4f0" stroke="#7a88b4" stroke-width="0.8"/><circle cx="3.5" cy="3.5" r="2.8" fill="#ffb020" stroke="#f04a10" stroke-width="0.9" stroke-dasharray="1 0.7"/><circle cx="3.5" cy="3.5" r="1.4" fill="#ffe070"/></svg>
<div class="t" style="font-size:11px;line-height:16px;top:845.36px;letter-spacing:-0.043px;left:339px;">Nový [1]</div>
<div style="left:393px;top:844px;width:71px;height:18px;background:linear-gradient(#fdfdfb,#efede4 60%,#dedbcd);border:1px solid #8a887a;border-radius:3px;"></div>
<svg style="position:absolute;left:397px;top:845px" width="16" height="16" viewBox="0 0 16 16"><path d="M2.5 1.5h7.5l3 3v10.5h-10.5z" fill="#fff" stroke="#7a88b4" stroke-width="1"/><rect x="4" y="7" width="7.5" height="6.5" fill="#c0cae6"/><rect x="4" y="5" width="7.5" height="0.9" fill="#aab6d8"/><path d="M10 1.5v3h3" fill="#e0e4f0" stroke="#7a88b4" stroke-width="0.8"/><path d="M5.5 12.5L13.5 3" stroke="#2a9a2a" stroke-width="2.6"/><path d="M5.5 12.5L13.5 3" stroke="#8ae08a" stroke-width="0.8"/><circle cx="13.8" cy="2.6" r="1.6" fill="#e84040"/><path d="M4.5 14l1-1.5" stroke="#333" stroke-width="1"/></svg>
<div class="t" style="font-size:11px;line-height:16px;top:845.36px;letter-spacing:0.091px;left:416px;">Měnit [2]</div>
<div style="left:470px;top:844px;width:95px;height:18px;background:linear-gradient(#fdfdfb,#efede4 60%,#dedbcd);border:1px solid #8a887a;border-radius:3px;"></div>
<svg style="position:absolute;left:474px;top:845px" width="16" height="16" viewBox="0 0 16 16"><path d="M2.5 1.5h7.5l3 3v10.5h-10.5z" fill="#fff" stroke="#7a88b4" stroke-width="1"/><rect x="4" y="7" width="7.5" height="6.5" fill="#c0cae6"/><rect x="4" y="5" width="7.5" height="0.9" fill="#aab6d8"/><path d="M10 1.5v3h3" fill="#e0e4f0" stroke="#7a88b4" stroke-width="0.8"/><path d="M9.5 10.5h2V8.5h2.5v2h2v2.5h-2v2h-2.5v-2h-2z" fill="#22b022" stroke="#0e6a0e" stroke-width="0.6"/></svg>
<div class="t" style="font-size:11px;line-height:16px;top:845.36px;letter-spacing:0.026px;left:493px;">Duplikovat [3]</div>
<div style="left:571px;top:844px;width:69px;height:18px;background:linear-gradient(#fdfdfb,#efede4 60%,#dedbcd);border:1px solid #8a887a;border-radius:3px;"></div>
<svg style="position:absolute;left:575px;top:845px" width="16" height="16" viewBox="0 0 16 16"><path d="M2.5 1.5h7.5l3 3v10.5h-10.5z" fill="#fff" stroke="#7a88b4" stroke-width="1"/><rect x="4" y="7" width="7.5" height="6.5" fill="#c0cae6"/><rect x="4" y="5" width="7.5" height="0.9" fill="#aab6d8"/><path d="M10 1.5v3h3" fill="#e0e4f0" stroke="#7a88b4" stroke-width="0.8"/><path d="M1 9.5l5 5.5M6 9.5l-5 5.5" stroke="#e83a1a" stroke-width="2.2"/></svg>
<div class="t" style="font-size:11px;line-height:16px;top:845.36px;letter-spacing:0.073px;left:594px;">Rušit [8]</div>
<div style="left:965px;top:844px;width:25px;height:18px;background:linear-gradient(#fdfdfb,#efede4 60%,#dedbcd);border:1px solid #8a887a;border-radius:3px;"></div>
<svg style="position:absolute;left:970px;top:845px" width="16" height="15" viewBox="0 0 16 15"><path d="M4 3v9M12 3L7 7.5 12 12" stroke="#4e4d44" stroke-width="2.1" fill="none"/></svg>
<div style="left:996px;top:844px;width:25px;height:18px;background:linear-gradient(#fdfdfb,#efede4 60%,#dedbcd);border:1px solid #8a887a;border-radius:3px;"></div>
<svg style="position:absolute;left:1001px;top:845px" width="16" height="15" viewBox="0 0 16 15"><path d="M8 3L3.5 7.5 8 12M13 3L8.5 7.5 13 12" stroke="#4e4d44" stroke-width="2.1" fill="none"/></svg>
<div style="left:1027px;top:844px;width:25px;height:18px;background:linear-gradient(#fdfdfb,#efede4 60%,#dedbcd);border:1px solid #8a887a;border-radius:3px;"></div>
<svg style="position:absolute;left:1032px;top:845px" width="16" height="15" viewBox="0 0 16 15"><path d="M10 3L5.5 7.5 10 12" stroke="#4e4d44" stroke-width="2.1" fill="none"/></svg>
<div style="left:1058px;top:844px;width:25px;height:18px;background:linear-gradient(#fdfdfb,#efede4 60%,#dedbcd);border:1px solid #8a887a;border-radius:3px;"></div>
<svg style="position:absolute;left:1063px;top:845px" width="16" height="15" viewBox="0 0 16 15"><path d="M6 3l4.5 4.5L6 12" stroke="#4e4d44" stroke-width="2.1" fill="none"/></svg>
<div style="left:1089px;top:844px;width:25px;height:18px;background:linear-gradient(#fdfdfb,#efede4 60%,#dedbcd);border:1px solid #8a887a;border-radius:3px;"></div>
<svg style="position:absolute;left:1094px;top:845px" width="16" height="15" viewBox="0 0 16 15"><path d="M3 3l4.5 4.5L3 12M8 3l4.5 4.5L8 12" stroke="#4e4d44" stroke-width="2.1" fill="none"/></svg>
<div style="left:1120px;top:844px;width:25px;height:18px;background:linear-gradient(#fdfdfb,#efede4 60%,#dedbcd);border:1px solid #8a887a;border-radius:3px;"></div>
<svg style="position:absolute;left:1125px;top:845px" width="16" height="15" viewBox="0 0 16 15"><path d="M4 3l5 4.5L4 12M12 3v9" stroke="#4e4d44" stroke-width="2.1" fill="none"/></svg>
<div style="left:311px;top:867px;width:837px;height:1px;background:#dcd9ca;"></div>
<div style="left:311px;top:868px;width:837px;height:1px;background:#fff;"></div>
<div class="t" style="font-size:11px;line-height:16px;top:869.36px;letter-spacing:-0.259px;left:315px;">TŘÍDĚNÍ=Číslo požadavku, ENTER=přehLed položek</div>
<div style="left:1006px;top:870px;width:1px;height:15px;background:#d0cdbe;"></div>
<svg style="position:absolute;left:1008px;top:869px" width="16" height="16" viewBox="0 0 16 16"><path d="M3.5 8C3 2.5 5 0.8 8 0.8s5 1.7 4.5 7.2z" fill="#e8b42a" stroke="#a87810" stroke-width="0.7"/><ellipse cx="8" cy="6.5" rx="3" ry="3.6" fill="#fbc89a"/><path d="M1.8 15.5C2 11 4.5 10 8 10s6 1 6.2 5.5z" fill="#2a62c8" stroke="#163e8a" stroke-width="0.7"/><path d="M7 10.5l1 2 1-2" stroke="#fff" stroke-width="0.8" fill="none"/></svg>
<div class="t" style="font-size:11px;line-height:16px;top:869.36px;letter-spacing:0.083px;left:1027px;">apso [34]</div>
<div style="left:1074px;top:870px;width:1px;height:15px;background:#d0cdbe;"></div>
<svg style="position:absolute;left:1076px;top:869px" width="16" height="16" viewBox="0 0 16 16"><path d="M1.6 5.2L9.6 4 10 2.2 14.5 1.2 14.6 12 4 14.8 1.8 13.6z" fill="url(#gfold)" stroke="#b88410" stroke-width="1.1" stroke-linejoin="round"/><path d="M1.8 5.4L4 6.4V14.6" stroke="#c89420" stroke-width="1" fill="none"/><path d="M4.2 6.4L14.2 4.6" stroke="#fff4b0" stroke-width="0.8"/></svg>
<div class="t" style="font-size:11px;line-height:16px;top:869.36px;transform:scaleX(0.9194);transform-origin:left center;letter-spacing:-0.300px;left:1097px;">APSO</div>
<div style="left:1127px;top:870px;width:1px;height:15px;background:#d0cdbe;"></div>
<svg style="position:absolute;left:1131px;top:870px" width="12" height="14" viewBox="0 0 12 14"><circle cx="7" cy="5" r="3.5" fill="#5ac85a" stroke="#2a8a2a" stroke-width="0.8"/><path d="M5 8l-3 5" stroke="#555" stroke-width="1.2"/></svg>
<div style="left:1156px;top:69px;width:228px;height:823px;background:#4279c4;"></div>
<div style="left:1156px;top:70px;width:228px;height:21px;background:linear-gradient(#86aee6 0px,#6b9ade 4px,#5587d2 12px,#4a7cc8 20px);"></div>
<div style="left:1156px;top:69px;width:228px;height:1px;background:#72a0e2;"></div>
<div style="left:1156px;top:69px;width:1px;height:823px;background:#72a0e2;"></div>
<div style="left:1383px;top:69px;width:1px;height:823px;background:#2a58a4;"></div>
<div style="left:1156px;top:891px;width:228px;height:1px;background:#2a58a4;"></div>
<div style="left:1160px;top:90px;width:220px;height:1px;background:#2a58a4;"></div>
<div style="left:1160px;top:90px;width:1px;height:798px;background:#2a58a4;"></div>
<div style="left:1379px;top:91px;width:1px;height:797px;background:#72a0e2;opacity:0.5;"></div>
<div style="left:1380px;top:888px;width:2px;height:2px;background:#1e4a90;"></div>
<div style="left:1381px;top:889px;width:2px;height:2px;background:#a8c4ee;"></div>
<div style="left:1375px;top:888px;width:2px;height:2px;background:#1e4a90;"></div>
<div style="left:1376px;top:889px;width:2px;height:2px;background:#a8c4ee;"></div>
<div style="left:1380px;top:883px;width:2px;height:2px;background:#1e4a90;"></div>
<div style="left:1381px;top:884px;width:2px;height:2px;background:#a8c4ee;"></div>
<div style="left:1157px;top:888px;width:2px;height:2px;background:#1e4a90;"></div>
<div style="left:1158px;top:889px;width:2px;height:2px;background:#a8c4ee;"></div>
<div style="left:1162px;top:888px;width:2px;height:2px;background:#1e4a90;"></div>
<div style="left:1163px;top:889px;width:2px;height:2px;background:#a8c4ee;"></div>
<div style="left:1157px;top:883px;width:2px;height:2px;background:#1e4a90;"></div>
<div style="left:1158px;top:884px;width:2px;height:2px;background:#a8c4ee;"></div>
<svg style="position:absolute;left:1162px;top:72px" width="16" height="16" viewBox="0 0 16 16"><rect x="6.8" y="6" width="3" height="9.5" fill="#c8962a" stroke="#8a6010" stroke-width="0.5"/><path d="M0.8 7L4.5 3.5 8.5 3v6.5L4.5 10z" fill="#2aa02a" stroke="#107010" stroke-width="0.6"/><path d="M8 3.5h5l2.5 3-2.5 3H8z" fill="#2a78e0" stroke="#1a4ca0" stroke-width="0.6"/><circle cx="8.3" cy="3.2" r="1.6" fill="#e8b830"/></svg>
<div class="t" style="font-size:11.5px;line-height:16px;top:72.20px;letter-spacing:0.030px;font-weight:bold;left:1183px;color:#000;">Funkce sezení</div>
<div style="left:1270px;top:74px;width:65px;height:1px;background:rgba(20,50,120,0.15);"></div>
<div style="left:1270px;top:78px;width:65px;height:1px;background:rgba(20,50,120,0.15);"></div>
<div style="left:1270px;top:82px;width:65px;height:1px;background:rgba(20,50,120,0.15);"></div>
<div style="left:1270px;top:86px;width:65px;height:1px;background:rgba(20,50,120,0.15);"></div>
<div style="left:1343px;top:72px;width:15px;height:15px;background:linear-gradient(135deg,#7a9cd8,#3f68ae 50%,#284c8c);border:1px solid #dde8f8;border-radius:2px;box-shadow:1px 1px 0 rgba(255,255,255,0.45);"></div>
<svg style="position:absolute;left:1345px;top:74px" width="11" height="11" viewBox="0 0 11 11"><g transform="translate(0.8,0.8)" opacity="0.55"><path d="M8 2L3 7M2.2 3.5v5.3h5.3" stroke="#000" stroke-width="2.4" fill="none"/></g><path d="M8 2L3 7M2.2 3.5v5.3h5.3" stroke="#fff" stroke-width="2.4" fill="none"/></svg>
<div style="left:1361px;top:72px;width:15px;height:15px;background:linear-gradient(135deg,#d8887a,#b8525a 50%,#963a48);border:1px solid #f4d8d0;border-radius:2px;box-shadow:1px 1px 0 rgba(255,255,255,0.45);"></div>
<svg style="position:absolute;left:1363px;top:74px" width="11" height="11" viewBox="0 0 11 11"><g transform="translate(0.8,0.8)" opacity="0.55"><path d="M2 2L8 8M8 2L2 8" stroke="#000" stroke-width="2.4" stroke-linecap="square"/></g><path d="M2 2L8 8M8 2L2 8" stroke="#fff" stroke-width="2.4" stroke-linecap="square"/></svg>
<div style="left:1161px;top:91px;width:218px;height:795px;background:#f0eee3;"></div>
<div style="left:1165px;top:95px;width:210px;height:767px;background:#fff;border:1px solid #6f6d60;"></div>
<div style="left:1166px;top:96px;width:208px;height:16px;background:linear-gradient(#fdfdfa,#ecebe2);border-bottom:1px solid #8a887a;"></div>
<div style="left:1209px;top:96px;width:1px;height:16px;background:#8a887a;"></div>
<div class="t" style="font-size:11px;line-height:16px;top:96.36px;letter-spacing:1.257px;left:1168px;">[#]</div>
<div class="t" style="font-size:11px;line-height:16px;top:96.36px;transform:scaleX(0.9921);transform-origin:left center;letter-spacing:-0.300px;left:1211px;">Funkce</div>
<div style="left:1166px;top:127px;width:208px;height:1px;background:#c4c1b4;"></div>
<div style="left:1209px;top:112px;width:1px;height:16px;background:#c4c1b4;"></div>
<div class="t" style="font-size:11px;line-height:16px;top:111.36px;letter-spacing:-0.117px;left:1168px;">1</div>
<div class="t" style="font-size:11px;line-height:16px;top:111.36px;letter-spacing:-0.112px;left:1211px;">/ - nastavení zobrazovaného s…</div>
<div style="left:1166px;top:143px;width:208px;height:1px;background:#c4c1b4;"></div>
<div style="left:1209px;top:128px;width:1px;height:16px;background:#c4c1b4;"></div>
<div class="t" style="font-size:11px;line-height:16px;top:127.36px;letter-spacing:-0.117px;left:1168px;">2</div>
<div class="t" style="font-size:11px;line-height:16px;top:127.36px;letter-spacing:-0.190px;left:1211px;">GO->další stav</div>
<div style="left:1166px;top:159px;width:208px;height:1px;background:#c4c1b4;"></div>
<div style="left:1209px;top:144px;width:1px;height:16px;background:#c4c1b4;"></div>
<div class="t" style="font-size:11px;line-height:16px;top:143.36px;letter-spacing:-0.117px;left:1168px;">3</div>
<div class="t" style="font-size:11px;line-height:16px;top:143.36px;letter-spacing:-0.116px;left:1211px;">text-INTERNÍ</div>
<div style="left:1166px;top:175px;width:208px;height:1px;background:#c4c1b4;"></div>
<div style="left:1209px;top:160px;width:1px;height:16px;background:#c4c1b4;"></div>
<div class="t" style="font-size:11px;line-height:16px;top:159.36px;letter-spacing:-0.117px;left:1168px;">4</div>
<div class="t" style="font-size:11px;line-height:16px;top:159.36px;transform:scaleX(0.9747);transform-origin:left center;letter-spacing:-0.300px;left:1211px;">tExt-EXTERNÍ</div>
<div style="left:1166px;top:191px;width:208px;height:1px;background:#c4c1b4;"></div>
<div style="left:1209px;top:176px;width:1px;height:16px;background:#c4c1b4;"></div>
<div class="t" style="font-size:11px;line-height:16px;top:175.36px;letter-spacing:-0.117px;left:1168px;">5</div>
<div class="t" style="font-size:11px;line-height:16px;top:175.36px;letter-spacing:-0.247px;left:1211px;">zObrazení informací v doplňkov…</div>
<div style="left:1166px;top:207px;width:208px;height:1px;background:#c4c1b4;"></div>
<div style="left:1209px;top:192px;width:1px;height:16px;background:#c4c1b4;"></div>
<div class="t" style="font-size:11px;line-height:16px;top:191.36px;letter-spacing:-0.117px;left:1168px;">6</div>
<div class="t" style="font-size:11px;line-height:16px;top:191.36px;letter-spacing:-0.156px;left:1211px;">přehLed položek</div>
<div style="left:1166px;top:223px;width:208px;height:1px;background:#c4c1b4;"></div>
<div style="left:1209px;top:208px;width:1px;height:16px;background:#c4c1b4;"></div>
<div class="t" style="font-size:11px;line-height:16px;top:207.36px;letter-spacing:-0.117px;left:1168px;">7</div>
<div class="t" style="font-size:11px;line-height:16px;top:207.36px;letter-spacing:-0.232px;left:1211px;">úKoly k zakázce</div>
<div style="left:1166px;top:239px;width:208px;height:1px;background:#c4c1b4;"></div>
<div style="left:1209px;top:224px;width:1px;height:16px;background:#c4c1b4;"></div>
<div class="t" style="font-size:11px;line-height:16px;top:223.36px;letter-spacing:-0.117px;left:1168px;">8</div>
<div class="t" style="font-size:11px;line-height:16px;top:223.36px;letter-spacing:-0.173px;left:1211px;">sumA položek (zobrazení)</div>
<div style="left:1166px;top:255px;width:208px;height:1px;background:#c4c1b4;"></div>
<div style="left:1209px;top:240px;width:1px;height:16px;background:#c4c1b4;"></div>
<div class="t" style="font-size:11px;line-height:16px;top:239.36px;letter-spacing:-0.117px;left:1168px;">9</div>
<div class="t" style="font-size:11px;line-height:16px;top:239.36px;letter-spacing:-0.115px;left:1211px;">2-kontrola položek MTZ</div>
<div style="left:1166px;top:271px;width:208px;height:1px;background:#c4c1b4;"></div>
<div style="left:1209px;top:256px;width:1px;height:16px;background:#c4c1b4;"></div>
<div class="t" style="font-size:11px;line-height:16px;top:255.36px;letter-spacing:-0.025px;left:1211px;">8-vytvoření faktury</div>
<div style="left:1166px;top:287px;width:208px;height:1px;background:#c4c1b4;"></div>
<div style="left:1209px;top:272px;width:1px;height:16px;background:#c4c1b4;"></div>
<div class="t" style="font-size:11px;line-height:16px;top:271.36px;letter-spacing:-0.242px;left:1211px;">Suma vybraných zakázek</div>
<div style="left:1166px;top:303px;width:208px;height:1px;background:#c4c1b4;"></div>
<div style="left:1209px;top:288px;width:1px;height:16px;background:#c4c1b4;"></div>
<div class="t" style="font-size:11px;line-height:16px;top:287.36px;letter-spacing:-0.143px;left:1211px;">přehled vYtvořených dokladů</div>
<div style="left:1166px;top:319px;width:208px;height:1px;background:#c4c1b4;"></div>
<div style="left:1209px;top:304px;width:1px;height:16px;background:#c4c1b4;"></div>
<div class="t" style="font-size:11px;line-height:16px;top:303.36px;letter-spacing:-0.151px;left:1211px;">3-výkony pracovníků</div>
<div style="left:1166px;top:335px;width:208px;height:1px;background:#c4c1b4;"></div>
<div style="left:1209px;top:320px;width:1px;height:16px;background:#c4c1b4;"></div>
<div class="t" style="font-size:11px;line-height:16px;top:319.36px;letter-spacing:-0.226px;left:1211px;">1-zobrazení ceníku firmy</div>
<div style="left:1166px;top:351px;width:208px;height:1px;background:#c4c1b4;"></div>
<div style="left:1209px;top:336px;width:1px;height:16px;background:#c4c1b4;"></div>
<div class="t" style="font-size:11px;line-height:16px;top:335.36px;letter-spacing:-0.109px;left:1211px;">9-přesun položek nebo celé zak.</div>
<div style="left:1166px;top:367px;width:208px;height:1px;background:#c4c1b4;"></div>
<div style="left:1209px;top:352px;width:1px;height:16px;background:#c4c1b4;"></div>
<div class="t" style="font-size:11px;line-height:16px;top:351.36px;letter-spacing:-0.201px;left:1211px;">vytvoření výdeJky</div>
<div style="left:1166px;top:383px;width:208px;height:1px;background:#c4c1b4;"></div>
<div style="left:1209px;top:368px;width:1px;height:16px;background:#c4c1b4;"></div>
<div class="t" style="font-size:11px;line-height:16px;top:367.36px;letter-spacing:-0.175px;left:1211px;">6-vložení výdejek</div>
<div style="left:1166px;top:399px;width:208px;height:1px;background:#c4c1b4;"></div>
<div style="left:1209px;top:384px;width:1px;height:16px;background:#c4c1b4;"></div>
<div class="t" style="font-size:11px;line-height:16px;top:383.36px;transform:scaleX(0.9903);transform-origin:left center;letter-spacing:-0.300px;left:1211px;">&lt; položky z TEMP-TABLE)</div>
<div style="left:1166px;top:415px;width:208px;height:1px;background:#c4c1b4;"></div>
<div style="left:1209px;top:400px;width:1px;height:16px;background:#c4c1b4;"></div>
<div class="t" style="font-size:11px;line-height:16px;top:399.36px;letter-spacing:-0.174px;left:1211px;">5-zobrazení firmy v Registru fir…</div>
<div style="left:1166px;top:431px;width:208px;height:1px;background:#c4c1b4;"></div>
<div style="left:1209px;top:416px;width:1px;height:16px;background:#c4c1b4;"></div>
<div class="t" style="font-size:11px;line-height:16px;top:415.36px;letter-spacing:-0.085px;left:1211px;">zobrazení dat pouze pro jednu …</div>
<div style="left:1166px;top:447px;width:208px;height:1px;background:#c4c1b4;"></div>
<div style="left:1209px;top:432px;width:1px;height:16px;background:#c4c1b4;"></div>
<div class="t" style="font-size:11px;line-height:16px;top:431.36px;letter-spacing:-0.268px;left:1211px;">! zobrazení vazby(NAB,ZAK,..)</div>
<div style="left:1166px;top:463px;width:208px;height:1px;background:#c4c1b4;"></div>
<div style="left:1209px;top:448px;width:1px;height:16px;background:#c4c1b4;"></div>
<div class="t" style="font-size:11px;line-height:16px;top:447.36px;letter-spacing:-0.141px;left:1211px;">Lokální menu [.]</div>
<div style="left:1167px;top:865px;width:100px;height:18px;background:linear-gradient(#fdfdfb,#efede4 60%,#dedbcd);border:1px solid #8a887a;border-radius:3px;"></div>
<div style="left:1185px;top:866px;width:14px;height:14px;border:1px dashed #2040a0;"></div>
<svg style="position:absolute;left:1188px;top:867px" width="8" height="9" viewBox="0 0 8 9"><path d="M4 0.5L7.5 4H5.5v4.5h-3V4H.5z" fill="#30c030"/></svg>
<div class="t" style="font-size:11px;line-height:16px;top:866.36px;letter-spacing:-0.041px;left:1203px;">Očísluj [-]</div>
<div style="left:1271px;top:865px;width:103px;height:18px;background:linear-gradient(#fdfdfb,#efede4 60%,#dedbcd);border:1px solid #8a887a;border-radius:3px;"></div>
<div style="left:1289px;top:866px;width:14px;height:14px;border:1px dashed #2040a0;"></div>
<svg style="position:absolute;left:1292px;top:871px" width="8" height="9" viewBox="0 0 8 9"><path d="M4 8.5L7.5 5H5.5V.5h-3V5H.5z" fill="#e03010"/></svg>
<div class="t" style="font-size:11px;line-height:16px;top:866.36px;letter-spacing:0.072px;left:1307px;">Očísluj [+]</div>
</body></html>
